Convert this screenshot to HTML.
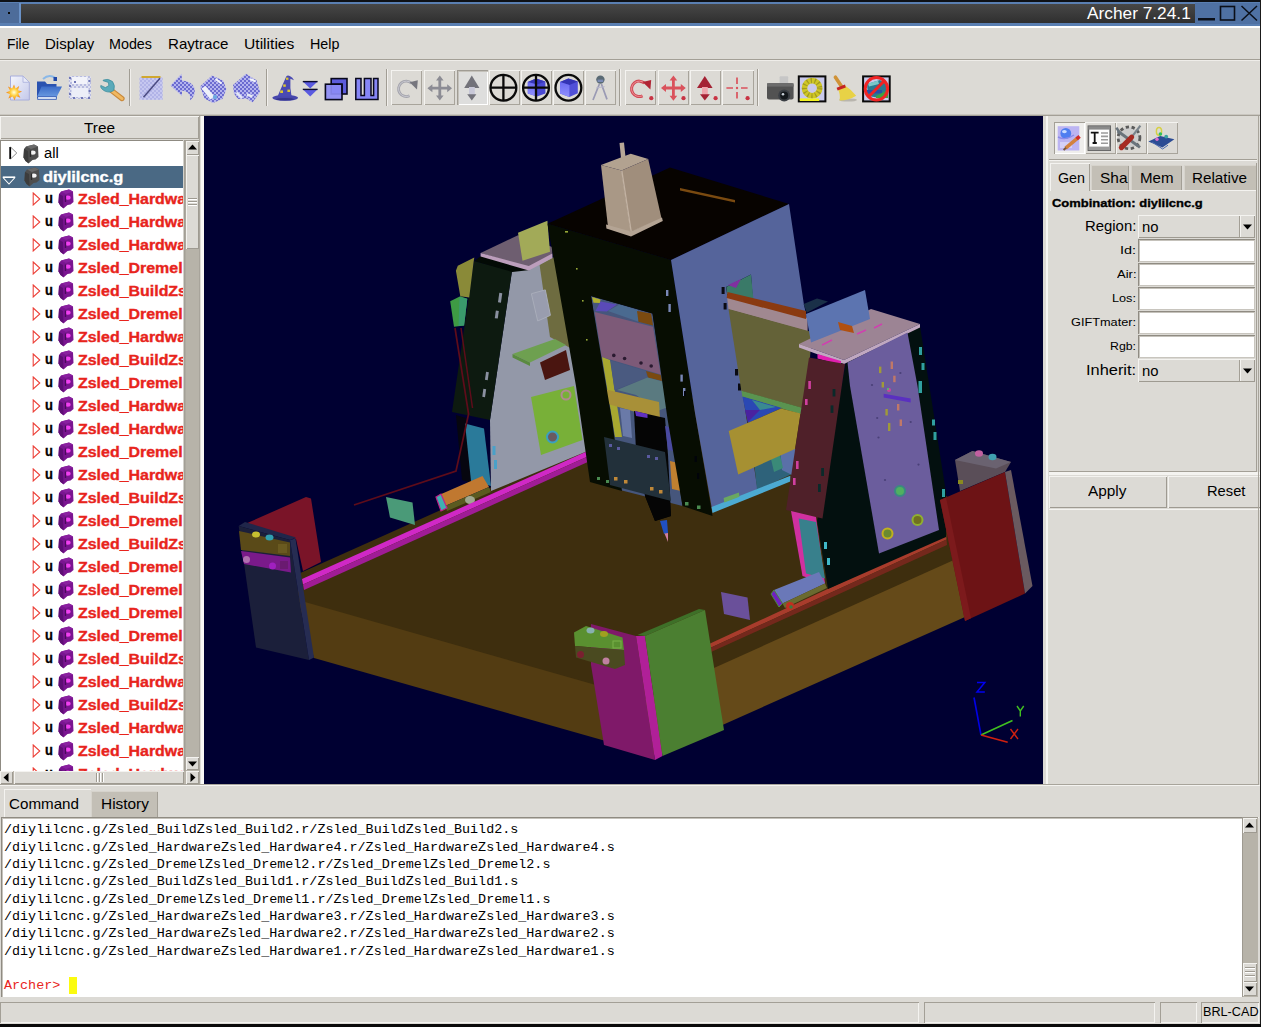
<!DOCTYPE html>
<html>
<head>
<meta charset="utf-8">
<title>Archer 7.24.1</title>
<style>
html,body{margin:0;padding:0;}
body{width:1261px;height:1027px;position:relative;overflow:hidden;background:#dcdad5;font-family:"Liberation Sans",sans-serif;color:#000;}
.abs{position:absolute;}
.t{position:absolute;white-space:nowrap;line-height:1;}
/* title bar */
#tb{left:0;top:0;width:1261px;height:26px;background:#5a7fb2;}
#tbdark{left:21px;top:4px;width:1174px;height:19px;background:linear-gradient(#474747,#2f2f2f);}
#tbleft{left:0;top:3px;width:19px;height:20px;background:#4d6c9a;}
/* generic */
.sunk{box-shadow:inset 1px 1px 0 #9e9a91,inset -1px -1px 0 #ffffff;}
.raised{box-shadow:inset 1px 1px 0 #ffffff,inset -1px -1px 0 #9e9a91;}
.btn{position:absolute;top:70px;height:35px;width:31px;box-shadow:inset 1px 1px 0 #f4f3f0,inset -1px -1px 0 #a8a49b;}
.vsep{position:absolute;top:69px;height:37px;width:1px;background:#a19d94;border-right:1px solid #f1efec;}
.menu{font-size:14.6px;top:37px;}
.trow{position:absolute;left:0;width:184px;height:23px;}
.zt{position:absolute;left:77px;top:4px;font-size:14.3px;font-weight:bold;color:#e8241c;white-space:nowrap;line-height:1;}
.zu{position:absolute;left:44px;top:3px;font-size:14px;font-weight:bold;color:#000;line-height:1;}
.lbl{position:absolute;font-size:12.5px;white-space:nowrap;line-height:1;text-align:right;width:86px;left:1050px;}
.ent{position:absolute;left:1138px;width:116px;height:22px;background:#fff;box-shadow:inset 1px 1px 0 #8a867d,inset 2px 2px 0 #c8c5be;}
.mono{font-family:"Liberation Mono",monospace;font-size:13.4px;position:absolute;left:4px;white-space:pre;line-height:1;color:#000;}
</style>
</head>
<body>
<!-- ===== TITLE BAR ===== -->
<div id="tb" class="abs"></div>
<div class="abs" style="left:0;top:0;width:1261px;height:2px;background:#0e1116;"></div>
<div id="tbleft" class="abs"></div>
<div class="abs" style="left:19px;top:3px;width:2px;height:20px;background:#6a92c8;"></div>
<div id="tbdark" class="abs"></div>
<div class="abs" style="left:8px;top:12px;width:2px;height:2px;background:#0a0a0a;"></div>
<div class="t" style="left:1087px;top:5px;font-size:17.3px;color:#fff;">Archer 7.24.1</div>
<svg class="abs" style="left:1195px;top:3px;" width="66" height="21" viewBox="1195 3 66 21">
<rect x="1195" y="3" width="66" height="21" fill="#4f71a3"/>
<rect x="1198" y="18" width="17" height="2.5" fill="#0b0f18"/>
<rect x="1220.5" y="6.5" width="14" height="13.5" fill="none" stroke="#0b0f18" stroke-width="1.6"/>
<path d="M1241.5 6 L1257 20.5 M1257 6 L1241.5 20.5" stroke="#0b0f18" stroke-width="1.5" fill="none"/>
</svg>
<div class="abs" style="left:0;top:26px;width:1261px;height:2px;background:#fff;"></div>

<!-- ===== MENU ===== -->
<div class="t" style="left:7.0px;top:36.6px;font-size:14.4px;color:#000;transform-origin:0 0;transform:scaleX(0.965);">File</div><div class="t" style="left:44.7px;top:36.6px;font-size:14.4px;color:#000;transform-origin:0 0;transform:scaleX(1.044);">Display</div><div class="t" style="left:109.0px;top:36.6px;font-size:14.4px;color:#000;transform-origin:0 0;transform:scaleX(0.995);">Modes</div><div class="t" style="left:167.5px;top:36.6px;font-size:14.4px;color:#000;transform-origin:0 0;transform:scaleX(1.050);">Raytrace</div><div class="t" style="left:243.6px;top:36.6px;font-size:14.4px;color:#000;transform-origin:0 0;transform:scaleX(1.086);">Utilities</div><div class="t" style="left:309.6px;top:36.6px;font-size:14.4px;color:#000;transform-origin:0 0;transform:scaleX(0.993);">Help</div>
<div class="abs" style="left:0;top:59px;width:1261px;height:1px;background:#a39f96;"></div>
<div class="abs" style="left:0;top:60px;width:1261px;height:1px;background:#efede9;"></div>

<!-- ===== TOOLBAR ===== -->
<div class="vsep" style="left:129px;"></div>
<div class="vsep" style="left:266px;"></div>
<div class="vsep" style="left:386px;"></div>
<div class="vsep" style="left:619px;"></div>
<div class="vsep" style="left:757px;"></div>
<div class="btn" style="left:391px;"></div>
<div class="btn" style="left:424px;"></div>
<div class="btn" style="left:457px;background:#dededd;box-shadow:inset 1px 1px 0 #a09c94,inset 2px 2px 0 #c4c1ba,inset -1px -1px 0 #fff;"></div>
<div class="btn" style="left:489px;"></div>
<div class="btn" style="left:521px;"></div>
<div class="btn" style="left:553px;"></div>
<div class="btn" style="left:585px;"></div>
<div class="btn" style="left:625px;"></div>
<div class="btn" style="left:658px;"></div>
<div class="btn" style="left:690px;"></div>
<div class="btn" style="left:722px;width:32px;"></div>
<svg class="abs" style="left:0;top:61px;" width="1261" height="53" viewBox="0 61 1261 53">
<defs>
<pattern id="chk" width="4" height="4" patternUnits="userSpaceOnUse"><rect width="4" height="4" fill="#b4b4ee"/><rect width="2" height="2" fill="#6c6cd0"/><rect x="2" y="2" width="2" height="2" fill="#6c6cd0"/></pattern>
<pattern id="chk2" width="4" height="4" patternUnits="userSpaceOnUse"><rect width="4" height="4" fill="#dfe1f0"/><rect width="2" height="2" fill="#b8bce0"/><rect x="2" y="2" width="2" height="2" fill="#b8bce0"/></pattern>
<linearGradient id="pg" x1="0" y1="0" x2="1" y2="1"><stop offset="0" stop-color="#f4f5fc"/><stop offset="1" stop-color="#c4c9ea"/></linearGradient>
<radialGradient id="sb"><stop offset="0" stop-color="#ffffe0"/><stop offset="0.45" stop-color="#ffd040"/><stop offset="1" stop-color="#f08018"/></radialGradient>
<linearGradient id="fold" x1="0" y1="0" x2="0" y2="1"><stop offset="0" stop-color="#3c6cc8"/><stop offset="1" stop-color="#6a9ae0"/></linearGradient>
<linearGradient id="cubeL" x1="0" y1="0" x2="0" y2="1"><stop offset="0" stop-color="#6a6af0"/><stop offset="1" stop-color="#9090ff"/></linearGradient>
</defs>
<!-- 1 new -->
<path d="M10.5 76 H23 L29.3 82.3 V100 H10.5Z" fill="url(#pg)" stroke="#a8aedc" stroke-width="1"/>
<path d="M23 76 V82.3 H29.3Z" fill="#e8eaf8" stroke="#a8aedc" stroke-width="0.8"/>
<path d="M14 84.5 L15.6 88.6 L19.2 86 L18 90.2 L22 91.5 L18.2 93.6 L20.4 97.8 L16.2 96.2 L14.6 100.2 L12.6 96.4 L8.4 98.4 L10 94.2 L6 92.6 L10 90.8 L8 86.6 L12.2 88.4Z" fill="url(#sb)"/>
<!-- 2 open -->
<path d="M43 79 Q49 73.5 55.5 78" stroke="#8ab8e8" stroke-width="2" fill="none"/>
<path d="M53.5 77 H57 V81 H53.5Z" fill="#2048a8"/>
<path d="M37 81.5 H45 L47 84 H56.5 V98 H37Z" fill="#2a52b0"/>
<path d="M41.5 86.6 H62 L56.7 97 H37Z" fill="url(#fold)"/>
<path d="M37.6 96.6 H56.4 V99.4 H37.6Z" fill="#e0e8f8" stroke="#2a52b0" stroke-width="0.8"/>
<!-- 3 save disabled -->
<rect x="68.8" y="76" width="22.2" height="23" rx="1.5" fill="url(#chk2)"/>
<rect x="72" y="77" width="15.5" height="7" fill="#f2f3fa"/>
<rect x="71.5" y="88" width="17" height="9" fill="#eceef8"/>
<g fill="#7078b8"><rect x="69" y="77" width="2" height="2"/><rect x="88.5" y="80" width="2" height="2"/><rect x="69" y="85" width="2" height="2"/><rect x="88.5" y="90" width="2" height="2"/><rect x="69" y="93" width="2" height="2"/><rect x="73" y="97" width="2" height="2"/><rect x="81" y="97" width="2" height="2"/><rect x="88" y="97" width="2" height="2"/><rect x="74" y="81" width="2" height="2"/></g>
<!-- 4 wrench -->
<path d="M111.5 90.5 L122 98.6" stroke="#c8883a" stroke-width="5.2" stroke-linecap="round"/>
<path d="M111.5 90.5 L122 98.6" stroke="#f0b860" stroke-width="3" stroke-linecap="round"/>
<path d="M103 80.2 Q108 78 112.5 81.5 Q115.5 85.5 113.8 90.5 L110.6 92 Q105 92.5 101.5 88.5 Q100.2 87 100.8 85.4 L105.4 87.6 L108.8 85.6 L108.4 82.4 L103.2 80.8Z" fill="#5aaaba" stroke="#3a8a9a" stroke-width="0.7"/>
<!-- 5 notepad disabled -->
<rect x="139.6" y="77.5" width="23" height="22.3" fill="url(#chk2)"/>
<rect x="139.6" y="77.5" width="23" height="22.3" fill="#a8a8f0" opacity="0.45"/>
<path d="M141.5 77 H160.5" stroke="#d0a830" stroke-width="2"/>
<path d="M143.5 97.2 L160 78.2" stroke="#4a4a80" stroke-width="1.5"/>
<!-- 6 undo disabled -->
<path d="M170.5 85.4 L181.6 73.8 L182 80.5 Q192 81 194.6 88.4 Q195.8 95.6 190 100.4 Q192 92.5 182 90.6 L182 96Z" fill="url(#chk)"/>
<!-- 7 -->
<path d="M200 86.5 L212 75.5 L223 80.5 L226.4 89 L222.5 99 L213 103 L204.5 98.5Z" fill="url(#chk)"/>
<path d="M201.5 88.5 L210.5 99.5 L214.5 96.5 L205.5 86Z" fill="#eef0f8"/>
<path d="M215.5 79 L221.5 83.5" stroke="#f2f4fa" stroke-width="2"/>
<circle cx="215" cy="97" r="2.2" fill="#70a8e0"/>
<!-- 8 -->
<path d="M233 85 L246 73.8 L256.5 80.2 L260 92 L252.5 102.5 L246.5 98.5 L238 99 L234 93.5Z" fill="url(#chk)"/>
<path d="M250 79 L255.5 81.5" stroke="#f2f4fa" stroke-width="2"/>
<path d="M236.5 92.5 L242 98 M247 94.5 L252.5 96.5" stroke="#e4e8f4" stroke-width="2.4"/>
<!-- 9 wizard hat -->
<ellipse cx="285.2" cy="97.8" rx="12.8" ry="3" fill="#4646ac"/>
<path d="M277.5 96.5 Q283 84 286.2 76.6 Q287.4 74.8 289.8 76 Q292.8 77.6 294 80.2 L290.4 78.8 Q289.8 88 291.6 96.6Z" fill="#4a4ab2"/>
<ellipse cx="285" cy="99.2" rx="9" ry="1.2" fill="#34348c"/>
<g fill="#dcc630"><rect x="286" y="77.6" width="2.4" height="2.2"/><rect x="283.2" y="84.4" width="2.6" height="2.4"/><rect x="280.2" y="90.4" width="2.8" height="2.6"/><rect x="287.4" y="89.6" width="2.6" height="2.4"/></g>
<!-- 10 double arrow -->
<path d="M302.8 81.4 H317.6 L310.2 88.6Z" fill="#5a5ae0"/><path d="M302.8 81.6 H317.6" stroke="#0c0c30" stroke-width="1.4"/>
<path d="M302.8 89.2 H317.6 L310.2 96.6Z" fill="#5a5ae0"/><path d="M302.8 89.4 H317.6" stroke="#0c0c30" stroke-width="1.4"/>
<!-- 11 squares -->
<rect x="331.2" y="78.6" width="15.8" height="15.4" fill="#5c5cdc" stroke="#08081c" stroke-width="1.6"/>
<rect x="325.4" y="84.2" width="16.6" height="15.4" fill="#8c8cf6" fill-opacity="0.92" stroke="#08081c" stroke-width="1.6"/>
<path d="M331.2 84.2 H342 V94" stroke="#08081c" stroke-width="1.2" fill="none"/>
<!-- 12 W -->
<path d="M355.8 78.4 H361 V95.4 H364.4 V78.4 H371 V95.4 H373.6 V78.4 H378 V99.6 H355.8Z" fill="#8686f6" stroke="#08081c" stroke-width="1.5"/>
<!-- 13 rotate grey -->
<path d="M411.5 83.2 A7.7 7.7 0 1 0 409.5 95.8" stroke="#a4a4ac" stroke-width="2.8" fill="none"/>
<path d="M411.5 83.2 A7.7 7.7 0 1 0 409.5 95.8" stroke="#c8c8d0" stroke-width="1" fill="none"/>
<path d="M409.6 82.2 L417.8 80.2 L417 89.4Z" fill="#76767e"/>
<!-- 14 translate grey -->
<path d="M439.8 75.4 L443.6 80.4 H441.2 V86.8 H447.2 V84.2 L452 88.2 L447.2 92.2 V89.6 H441.2 V95.6 H443.6 L439.8 100.6 L436 95.6 H438.4 V89.6 H432.4 V92.2 L427.4 88.2 L432.4 84.2 V86.8 H438.4 V80.4 H436Z" fill="#8c8c94"/>
<!-- 15 scale grey -->
<path d="M471.8 75.6 L479.4 88 H464.2Z" fill="#72727a"/>
<path d="M469 87 H474.8 V95 H469Z" fill="#c8c8d8"/>
<path d="M471.8 100.4 L467.2 94.2 H476.4Z" fill="#72727a"/>
<!-- 16 center -->
<g stroke="#0a0a0a" stroke-width="2.3" fill="none"><circle cx="503.4" cy="87.7" r="12.9"/><path d="M503.4 74.8 V100.6 M490.5 87.7 H516.3"/></g>
<!-- 17 -->
<path d="M527.8 82 L536 78.6 L545.4 81.4 V93.4 L537 96.6 L527.8 93.4Z" fill="#4a4ad4"/>
<path d="M527.8 82 L537 84.6 L545.4 81.4 L536 78.6Z" fill="#3636b8"/>
<path d="M527.8 82 L537 84.6 V96.6 L527.8 93.4Z" fill="url(#cubeL)"/>
<g stroke="#0a0a0a" stroke-width="2.3" fill="none"><circle cx="536" cy="87.7" r="12.9"/><path d="M536 74.8 V100.6 M523.1 87.7 H548.9"/></g>
<!-- 18 -->
<path d="M560 82 L568.4 78.4 L577.8 81.6 V93.2 L569.4 97 L560 93.4Z" fill="#5050d8"/>
<path d="M560 82 L569.4 85 L577.8 81.6 L568.4 78.4Z" fill="#3434b4"/>
<path d="M560 82 L569.4 85 V97 L560 93.4Z" fill="url(#cubeL)"/>
<g stroke="#0a0a0a" stroke-width="2.3" fill="none"><circle cx="568.4" cy="87.7" r="12.9"/></g>
<!-- 19 compass -->
<ellipse cx="600.4" cy="79.6" rx="4.2" ry="4.2" fill="#5a6a74"/>
<rect x="597.6" y="79.6" width="5.6" height="2.4" fill="#7a8ab4"/>
<path d="M599.4 84 L593 100 M601.4 84 L607 99.4" stroke="#9a9ab4" stroke-width="1.7" fill="none"/>
<path d="M596 88 L604.6 86.6" stroke="#b8b8cc" stroke-width="1"/>
<!-- 20 rotate red -->
<path d="M644.5 83.2 A7.7 7.7 0 1 0 642.5 95.8" stroke="#d04a54" stroke-width="3" fill="none"/>
<path d="M644.5 83.2 A7.7 7.7 0 1 0 642.5 95.8" stroke="#ee9098" stroke-width="1" fill="none"/>
<path d="M642.6 82 L651.2 80 L650.4 89.6Z" fill="#b02434"/>
<circle cx="651.3" cy="98.2" r="2.1" fill="#c83444"/>
<!-- 21 translate red -->
<path d="M673.4 75.6 L677.2 80.6 H674.8 V86.6 H680.8 V84 L685.8 88 L680.8 92 V89.4 H674.8 V95.8 H677.2 L673.4 100.8 L669.6 95.8 H672 V89.4 H666 V92 L661 88 L666 84 V86.6 H672 V80.6 H669.6Z" fill="#da525c"/>
<circle cx="683.5" cy="98.2" r="2.1" fill="#c83444"/>
<!-- 22 scale red -->
<path d="M704.8 76 L712.6 88 H697Z" fill="#a42234"/>
<path d="M702 87 H707.8 V95 H702Z" fill="#eea4ac"/>
<path d="M704.8 100.6 L700 94.2 H709.8Z" fill="#a42234"/>
<circle cx="715.6" cy="98.2" r="2.1" fill="#c83444"/>
<!-- 23 center red -->
<g stroke="#da525c" stroke-width="1.7" fill="none"><path d="M726.4 88 H733 M741 88 H747.6 M737 77.4 V84 M737 92 V98.6"/></g>
<circle cx="737" cy="88" r="1.2" fill="#da525c"/>
<circle cx="747.6" cy="98.2" r="2.1" fill="#c83444"/>
<!-- 24 camera -->
<rect x="779.6" y="76.2" width="8.6" height="8" rx="1" fill="#c6c6c6"/>
<path d="M767 85 Q767 83.2 769 83.2 H791.6 Q793.6 83.2 793.6 85 V97.8 Q793.6 99.6 791.6 99.6 H769 Q767 99.6 767 97.8Z" fill="#525252"/>
<rect x="767" y="83.2" width="26.6" height="3.4" fill="#6c6c6c"/>
<circle cx="784.2" cy="95.6" r="6" fill="#3a3e44"/>
<circle cx="784.2" cy="95.6" r="4" fill="#14181c"/>
<circle cx="783" cy="94.2" r="1.3" fill="#c8d0d8"/>
<!-- 25 ring -->
<rect x="798.8" y="76.4" width="26.6" height="25" fill="#c9c9ea" stroke="#0a0a0a" stroke-width="2"/>
<circle cx="812.1" cy="88.2" r="7.6" fill="none" stroke="#cfc624" stroke-width="5.6"/>
<circle cx="812.1" cy="88.2" r="7.6" fill="none" stroke="#7a7420" stroke-width="5.2" stroke-dasharray="1.2 2.6" opacity="0.55"/>
<rect x="799.8" y="98.4" width="19.4" height="2.6" fill="#f2f220"/>
<!-- 26 broom -->
<ellipse cx="848" cy="100" rx="9" ry="1.6" fill="#b8b5ae"/>
<path d="M835.4 77.2 L841.6 86.4" stroke="#d09236" stroke-width="3.6" stroke-linecap="round"/>
<path d="M837.6 88.4 L845 85.4 Q852 90 856.2 95.8 Q849 100.4 839.6 100.6 Q840.8 94 837.6 88.4Z" fill="#e8d246"/>
<path d="M836.6 87.8 L845 84.6 L845.8 87.4 L837.6 90.4Z" fill="#c42424"/>
<!-- 27 no-sign -->
<rect x="863.1" y="76.4" width="26.6" height="25" fill="#c9c9ea" stroke="#0a0a0a" stroke-width="2"/>
<path d="M867 84 L880 80 L886 84 L886 92 L880 98 L868 96Z" fill="#2a7a90"/>
<path d="M866.5 90 H882 V93.4 H866.5Z" fill="#2a50a8"/>
<path d="M876 96 L888 90 V98 H876Z" fill="#40a040"/>
<path d="M868 83.5 L878 80.5 L879 84 L869 86.5Z" fill="#7ac8c8"/>
<circle cx="876.4" cy="88.8" r="11.2" fill="none" stroke="#f02424" stroke-width="3"/>
<path d="M868.6 96.8 L884.4 80.8" stroke="#f02424" stroke-width="3"/>
</svg>

<div class="abs" style="left:0;top:114px;width:1261px;height:1px;background:#c9c6bf;"></div>
<div class="abs" style="left:0;top:115px;width:1261px;height:1px;background:#a39f96;"></div>

<!-- ===== TREE ===== -->
<div class="abs" style="left:0;top:116px;width:199px;height:23px;box-shadow:inset 1px 1px 0 #f4f3f0,inset -1px -1px 0 #a39f96;"></div>
<div class="t" style="left:84.0px;top:120.8px;font-size:14.2px;color:#000;transform-origin:0 0;transform:scaleX(1.081);">Tree</div>
<div class="abs" style="left:0;top:140px;width:183px;height:631px;background:#fff;box-shadow:inset 1px 1px 0 #8f8b82;overflow:hidden;">
<svg class="abs" style="left:9px;top:6px" width="9" height="14" viewBox="0 0 9 14"><path d="M1.2 1 V13" stroke="#000" stroke-width="1.8"/><path d="M1.5 1 L7.8 7 L1.5 13" stroke="#8a8a8a" stroke-width="1" fill="none"/></svg>
<svg class="abs" style="left:23px;top:4px" width="16" height="20" viewBox="0 0 16 20"><path d="M3 2.5 L11 0.5 L15 2.5 L15.5 13 L12.5 15.5 L9.5 16 L5.5 19.5 L2.5 17 L0.5 13.5 L1 5 Z" fill="#4e4e4e"/><path d="M3 2.5 L11 0.5 L15 2.5 L8 5 Z" fill="#6a6a6a"/><path d="M1 5 L5 7 L5.5 19 L2.5 17 L0.5 13.5Z" fill="#3c3c3c"/><ellipse cx="9.8" cy="8.6" rx="2.8" ry="2.2" fill="#f4f4f4"/><path d="M7.5 6.5 L7.5 13" stroke="#2a2a2a" stroke-width="1.3"/></svg>
<div class="t" style="left:43.6px;top:6.2px;font-size:14.0px;color:#000;transform-origin:0 0;transform:scaleX(1.050);">all</div>
<div class="abs" style="left:1px;top:26px;width:183px;height:22px;background:#4a6984;"></div>
<svg class="abs" style="left:2px;top:36px" width="14" height="9" viewBox="0 0 14 9"><path d="M0.8 1.2 H13.2" stroke="#fff" stroke-width="1.6"/><path d="M1 1.5 L7 8 L13 1.5" stroke="#fff" stroke-width="1.1" fill="none"/></svg>
<svg class="abs" style="left:24px;top:27px" width="16" height="20" viewBox="0 0 16 20"><path d="M3 2.5 L11 0.5 L15 2.5 L15.5 13 L12.5 15.5 L9.5 16 L5.5 19.5 L2.5 17 L0.5 13.5 L1 5 Z" fill="#4e4e4e"/><path d="M3 2.5 L11 0.5 L15 2.5 L8 5 Z" fill="#6a6a6a"/><path d="M1 5 L5 7 L5.5 19 L2.5 17 L0.5 13.5Z" fill="#3c3c3c"/><ellipse cx="9.8" cy="8.6" rx="2.8" ry="2.2" fill="#f4f4f4"/><path d="M7.5 6.5 L7.5 13" stroke="#2a2a2a" stroke-width="1.3"/></svg>
<div class="t" style="left:43.4px;top:30.0px;font-size:14.0px;font-weight:bold;-webkit-text-stroke:0.35px;color:#fff;transform-origin:0 0;transform:scaleX(1.173);">diylilcnc.g</div>
<svg class="abs" style="left:32px;top:52px" width="9" height="14" viewBox="0 0 9 14"><path d="M1.2 1 L7.8 7 L1.2 13 Z" stroke="#ec3e36" stroke-width="1.05" fill="none"/></svg>
<div class="t" style="left:45.2px;top:51.0px;font-size:14.0px;font-weight:bold;-webkit-text-stroke:0.35px;color:#000;transform-origin:0 0;transform:scaleX(0.924);">u</div>
<svg class="abs" style="left:58px;top:49px" width="16" height="20" viewBox="0 0 16 20"><path d="M3 2.5 L11 0.5 L15 2.5 L15.5 13 L12.5 15.5 L9.5 16 L5.5 19.5 L2.5 17 L0.5 13.5 L1 5 Z" fill="#7a1590"/><path d="M3 2.5 L11 0.5 L15 2.5 L8 5 Z" fill="#8a20a0"/><path d="M1 5 L5 7 L5.5 19 L2.5 17 L0.5 13.5Z" fill="#5e0e74"/><ellipse cx="9.8" cy="8.6" rx="2.8" ry="2.2" fill="#f040f0"/><path d="M7.5 6.5 L7.5 13" stroke="#4a0a5c" stroke-width="1.3"/></svg>
<div class="t" style="left:77.8px;top:52.2px;font-size:14px;font-weight:bold;-webkit-text-stroke:0.35px #e8241c;color:#e8241c;transform-origin:0 0;transform:scaleX(1.139);">Zsled_HardwareZsled_Hardware4.r</div>
<svg class="abs" style="left:32px;top:75px" width="9" height="14" viewBox="0 0 9 14"><path d="M1.2 1 L7.8 7 L1.2 13 Z" stroke="#ec3e36" stroke-width="1.05" fill="none"/></svg>
<div class="t" style="left:45.2px;top:74.0px;font-size:14.0px;font-weight:bold;-webkit-text-stroke:0.35px;color:#000;transform-origin:0 0;transform:scaleX(0.924);">u</div>
<svg class="abs" style="left:58px;top:72px" width="16" height="20" viewBox="0 0 16 20"><path d="M3 2.5 L11 0.5 L15 2.5 L15.5 13 L12.5 15.5 L9.5 16 L5.5 19.5 L2.5 17 L0.5 13.5 L1 5 Z" fill="#7a1590"/><path d="M3 2.5 L11 0.5 L15 2.5 L8 5 Z" fill="#8a20a0"/><path d="M1 5 L5 7 L5.5 19 L2.5 17 L0.5 13.5Z" fill="#5e0e74"/><ellipse cx="9.8" cy="8.6" rx="2.8" ry="2.2" fill="#f040f0"/><path d="M7.5 6.5 L7.5 13" stroke="#4a0a5c" stroke-width="1.3"/></svg>
<div class="t" style="left:77.8px;top:75.2px;font-size:14px;font-weight:bold;-webkit-text-stroke:0.35px #e8241c;color:#e8241c;transform-origin:0 0;transform:scaleX(1.139);">Zsled_HardwareZsled_Hardware4.r</div>
<svg class="abs" style="left:32px;top:98px" width="9" height="14" viewBox="0 0 9 14"><path d="M1.2 1 L7.8 7 L1.2 13 Z" stroke="#ec3e36" stroke-width="1.05" fill="none"/></svg>
<div class="t" style="left:45.2px;top:97.0px;font-size:14.0px;font-weight:bold;-webkit-text-stroke:0.35px;color:#000;transform-origin:0 0;transform:scaleX(0.924);">u</div>
<svg class="abs" style="left:58px;top:95px" width="16" height="20" viewBox="0 0 16 20"><path d="M3 2.5 L11 0.5 L15 2.5 L15.5 13 L12.5 15.5 L9.5 16 L5.5 19.5 L2.5 17 L0.5 13.5 L1 5 Z" fill="#7a1590"/><path d="M3 2.5 L11 0.5 L15 2.5 L8 5 Z" fill="#8a20a0"/><path d="M1 5 L5 7 L5.5 19 L2.5 17 L0.5 13.5Z" fill="#5e0e74"/><ellipse cx="9.8" cy="8.6" rx="2.8" ry="2.2" fill="#f040f0"/><path d="M7.5 6.5 L7.5 13" stroke="#4a0a5c" stroke-width="1.3"/></svg>
<div class="t" style="left:77.8px;top:98.2px;font-size:14px;font-weight:bold;-webkit-text-stroke:0.35px #e8241c;color:#e8241c;transform-origin:0 0;transform:scaleX(1.139);">Zsled_HardwareZsled_Hardware4.r</div>
<svg class="abs" style="left:32px;top:121px" width="9" height="14" viewBox="0 0 9 14"><path d="M1.2 1 L7.8 7 L1.2 13 Z" stroke="#ec3e36" stroke-width="1.05" fill="none"/></svg>
<div class="t" style="left:45.2px;top:120.0px;font-size:14.0px;font-weight:bold;-webkit-text-stroke:0.35px;color:#000;transform-origin:0 0;transform:scaleX(0.924);">u</div>
<svg class="abs" style="left:58px;top:118px" width="16" height="20" viewBox="0 0 16 20"><path d="M3 2.5 L11 0.5 L15 2.5 L15.5 13 L12.5 15.5 L9.5 16 L5.5 19.5 L2.5 17 L0.5 13.5 L1 5 Z" fill="#7a1590"/><path d="M3 2.5 L11 0.5 L15 2.5 L8 5 Z" fill="#8a20a0"/><path d="M1 5 L5 7 L5.5 19 L2.5 17 L0.5 13.5Z" fill="#5e0e74"/><ellipse cx="9.8" cy="8.6" rx="2.8" ry="2.2" fill="#f040f0"/><path d="M7.5 6.5 L7.5 13" stroke="#4a0a5c" stroke-width="1.3"/></svg>
<div class="t" style="left:77.8px;top:121.2px;font-size:14px;font-weight:bold;-webkit-text-stroke:0.35px #e8241c;color:#e8241c;transform-origin:0 0;transform:scaleX(1.139);">Zsled_Dremel</div>
<svg class="abs" style="left:32px;top:144px" width="9" height="14" viewBox="0 0 9 14"><path d="M1.2 1 L7.8 7 L1.2 13 Z" stroke="#ec3e36" stroke-width="1.05" fill="none"/></svg>
<div class="t" style="left:45.2px;top:143.0px;font-size:14.0px;font-weight:bold;-webkit-text-stroke:0.35px;color:#000;transform-origin:0 0;transform:scaleX(0.924);">u</div>
<svg class="abs" style="left:58px;top:141px" width="16" height="20" viewBox="0 0 16 20"><path d="M3 2.5 L11 0.5 L15 2.5 L15.5 13 L12.5 15.5 L9.5 16 L5.5 19.5 L2.5 17 L0.5 13.5 L1 5 Z" fill="#7a1590"/><path d="M3 2.5 L11 0.5 L15 2.5 L8 5 Z" fill="#8a20a0"/><path d="M1 5 L5 7 L5.5 19 L2.5 17 L0.5 13.5Z" fill="#5e0e74"/><ellipse cx="9.8" cy="8.6" rx="2.8" ry="2.2" fill="#f040f0"/><path d="M7.5 6.5 L7.5 13" stroke="#4a0a5c" stroke-width="1.3"/></svg>
<div class="t" style="left:77.8px;top:144.2px;font-size:14px;font-weight:bold;-webkit-text-stroke:0.35px #e8241c;color:#e8241c;transform-origin:0 0;transform:scaleX(1.139);">Zsled_BuildZsled_Build2.r</div>
<svg class="abs" style="left:32px;top:167px" width="9" height="14" viewBox="0 0 9 14"><path d="M1.2 1 L7.8 7 L1.2 13 Z" stroke="#ec3e36" stroke-width="1.05" fill="none"/></svg>
<div class="t" style="left:45.2px;top:166.0px;font-size:14.0px;font-weight:bold;-webkit-text-stroke:0.35px;color:#000;transform-origin:0 0;transform:scaleX(0.924);">u</div>
<svg class="abs" style="left:58px;top:164px" width="16" height="20" viewBox="0 0 16 20"><path d="M3 2.5 L11 0.5 L15 2.5 L15.5 13 L12.5 15.5 L9.5 16 L5.5 19.5 L2.5 17 L0.5 13.5 L1 5 Z" fill="#7a1590"/><path d="M3 2.5 L11 0.5 L15 2.5 L8 5 Z" fill="#8a20a0"/><path d="M1 5 L5 7 L5.5 19 L2.5 17 L0.5 13.5Z" fill="#5e0e74"/><ellipse cx="9.8" cy="8.6" rx="2.8" ry="2.2" fill="#f040f0"/><path d="M7.5 6.5 L7.5 13" stroke="#4a0a5c" stroke-width="1.3"/></svg>
<div class="t" style="left:77.8px;top:167.2px;font-size:14px;font-weight:bold;-webkit-text-stroke:0.35px #e8241c;color:#e8241c;transform-origin:0 0;transform:scaleX(1.139);">Zsled_Dremel</div>
<svg class="abs" style="left:32px;top:190px" width="9" height="14" viewBox="0 0 9 14"><path d="M1.2 1 L7.8 7 L1.2 13 Z" stroke="#ec3e36" stroke-width="1.05" fill="none"/></svg>
<div class="t" style="left:45.2px;top:189.0px;font-size:14.0px;font-weight:bold;-webkit-text-stroke:0.35px;color:#000;transform-origin:0 0;transform:scaleX(0.924);">u</div>
<svg class="abs" style="left:58px;top:187px" width="16" height="20" viewBox="0 0 16 20"><path d="M3 2.5 L11 0.5 L15 2.5 L15.5 13 L12.5 15.5 L9.5 16 L5.5 19.5 L2.5 17 L0.5 13.5 L1 5 Z" fill="#7a1590"/><path d="M3 2.5 L11 0.5 L15 2.5 L8 5 Z" fill="#8a20a0"/><path d="M1 5 L5 7 L5.5 19 L2.5 17 L0.5 13.5Z" fill="#5e0e74"/><ellipse cx="9.8" cy="8.6" rx="2.8" ry="2.2" fill="#f040f0"/><path d="M7.5 6.5 L7.5 13" stroke="#4a0a5c" stroke-width="1.3"/></svg>
<div class="t" style="left:77.8px;top:190.2px;font-size:14px;font-weight:bold;-webkit-text-stroke:0.35px #e8241c;color:#e8241c;transform-origin:0 0;transform:scaleX(1.139);">Zsled_HardwareZsled_Hardware4.r</div>
<svg class="abs" style="left:32px;top:213px" width="9" height="14" viewBox="0 0 9 14"><path d="M1.2 1 L7.8 7 L1.2 13 Z" stroke="#ec3e36" stroke-width="1.05" fill="none"/></svg>
<div class="t" style="left:45.2px;top:212.0px;font-size:14.0px;font-weight:bold;-webkit-text-stroke:0.35px;color:#000;transform-origin:0 0;transform:scaleX(0.924);">u</div>
<svg class="abs" style="left:58px;top:210px" width="16" height="20" viewBox="0 0 16 20"><path d="M3 2.5 L11 0.5 L15 2.5 L15.5 13 L12.5 15.5 L9.5 16 L5.5 19.5 L2.5 17 L0.5 13.5 L1 5 Z" fill="#7a1590"/><path d="M3 2.5 L11 0.5 L15 2.5 L8 5 Z" fill="#8a20a0"/><path d="M1 5 L5 7 L5.5 19 L2.5 17 L0.5 13.5Z" fill="#5e0e74"/><ellipse cx="9.8" cy="8.6" rx="2.8" ry="2.2" fill="#f040f0"/><path d="M7.5 6.5 L7.5 13" stroke="#4a0a5c" stroke-width="1.3"/></svg>
<div class="t" style="left:77.8px;top:213.2px;font-size:14px;font-weight:bold;-webkit-text-stroke:0.35px #e8241c;color:#e8241c;transform-origin:0 0;transform:scaleX(1.139);">Zsled_BuildZsled_Build2.r</div>
<svg class="abs" style="left:32px;top:236px" width="9" height="14" viewBox="0 0 9 14"><path d="M1.2 1 L7.8 7 L1.2 13 Z" stroke="#ec3e36" stroke-width="1.05" fill="none"/></svg>
<div class="t" style="left:45.2px;top:235.0px;font-size:14.0px;font-weight:bold;-webkit-text-stroke:0.35px;color:#000;transform-origin:0 0;transform:scaleX(0.924);">u</div>
<svg class="abs" style="left:58px;top:233px" width="16" height="20" viewBox="0 0 16 20"><path d="M3 2.5 L11 0.5 L15 2.5 L15.5 13 L12.5 15.5 L9.5 16 L5.5 19.5 L2.5 17 L0.5 13.5 L1 5 Z" fill="#7a1590"/><path d="M3 2.5 L11 0.5 L15 2.5 L8 5 Z" fill="#8a20a0"/><path d="M1 5 L5 7 L5.5 19 L2.5 17 L0.5 13.5Z" fill="#5e0e74"/><ellipse cx="9.8" cy="8.6" rx="2.8" ry="2.2" fill="#f040f0"/><path d="M7.5 6.5 L7.5 13" stroke="#4a0a5c" stroke-width="1.3"/></svg>
<div class="t" style="left:77.8px;top:236.2px;font-size:14px;font-weight:bold;-webkit-text-stroke:0.35px #e8241c;color:#e8241c;transform-origin:0 0;transform:scaleX(1.139);">Zsled_Dremel</div>
<svg class="abs" style="left:32px;top:259px" width="9" height="14" viewBox="0 0 9 14"><path d="M1.2 1 L7.8 7 L1.2 13 Z" stroke="#ec3e36" stroke-width="1.05" fill="none"/></svg>
<div class="t" style="left:45.2px;top:258.0px;font-size:14.0px;font-weight:bold;-webkit-text-stroke:0.35px;color:#000;transform-origin:0 0;transform:scaleX(0.924);">u</div>
<svg class="abs" style="left:58px;top:256px" width="16" height="20" viewBox="0 0 16 20"><path d="M3 2.5 L11 0.5 L15 2.5 L15.5 13 L12.5 15.5 L9.5 16 L5.5 19.5 L2.5 17 L0.5 13.5 L1 5 Z" fill="#7a1590"/><path d="M3 2.5 L11 0.5 L15 2.5 L8 5 Z" fill="#8a20a0"/><path d="M1 5 L5 7 L5.5 19 L2.5 17 L0.5 13.5Z" fill="#5e0e74"/><ellipse cx="9.8" cy="8.6" rx="2.8" ry="2.2" fill="#f040f0"/><path d="M7.5 6.5 L7.5 13" stroke="#4a0a5c" stroke-width="1.3"/></svg>
<div class="t" style="left:77.8px;top:259.2px;font-size:14px;font-weight:bold;-webkit-text-stroke:0.35px #e8241c;color:#e8241c;transform-origin:0 0;transform:scaleX(1.139);">Zsled_HardwareZsled_Hardware4.r</div>
<svg class="abs" style="left:32px;top:282px" width="9" height="14" viewBox="0 0 9 14"><path d="M1.2 1 L7.8 7 L1.2 13 Z" stroke="#ec3e36" stroke-width="1.05" fill="none"/></svg>
<div class="t" style="left:45.2px;top:281.0px;font-size:14.0px;font-weight:bold;-webkit-text-stroke:0.35px;color:#000;transform-origin:0 0;transform:scaleX(0.924);">u</div>
<svg class="abs" style="left:58px;top:279px" width="16" height="20" viewBox="0 0 16 20"><path d="M3 2.5 L11 0.5 L15 2.5 L15.5 13 L12.5 15.5 L9.5 16 L5.5 19.5 L2.5 17 L0.5 13.5 L1 5 Z" fill="#7a1590"/><path d="M3 2.5 L11 0.5 L15 2.5 L8 5 Z" fill="#8a20a0"/><path d="M1 5 L5 7 L5.5 19 L2.5 17 L0.5 13.5Z" fill="#5e0e74"/><ellipse cx="9.8" cy="8.6" rx="2.8" ry="2.2" fill="#f040f0"/><path d="M7.5 6.5 L7.5 13" stroke="#4a0a5c" stroke-width="1.3"/></svg>
<div class="t" style="left:77.8px;top:282.2px;font-size:14px;font-weight:bold;-webkit-text-stroke:0.35px #e8241c;color:#e8241c;transform-origin:0 0;transform:scaleX(1.139);">Zsled_HardwareZsled_Hardware4.r</div>
<svg class="abs" style="left:32px;top:305px" width="9" height="14" viewBox="0 0 9 14"><path d="M1.2 1 L7.8 7 L1.2 13 Z" stroke="#ec3e36" stroke-width="1.05" fill="none"/></svg>
<div class="t" style="left:45.2px;top:304.0px;font-size:14.0px;font-weight:bold;-webkit-text-stroke:0.35px;color:#000;transform-origin:0 0;transform:scaleX(0.924);">u</div>
<svg class="abs" style="left:58px;top:302px" width="16" height="20" viewBox="0 0 16 20"><path d="M3 2.5 L11 0.5 L15 2.5 L15.5 13 L12.5 15.5 L9.5 16 L5.5 19.5 L2.5 17 L0.5 13.5 L1 5 Z" fill="#7a1590"/><path d="M3 2.5 L11 0.5 L15 2.5 L8 5 Z" fill="#8a20a0"/><path d="M1 5 L5 7 L5.5 19 L2.5 17 L0.5 13.5Z" fill="#5e0e74"/><ellipse cx="9.8" cy="8.6" rx="2.8" ry="2.2" fill="#f040f0"/><path d="M7.5 6.5 L7.5 13" stroke="#4a0a5c" stroke-width="1.3"/></svg>
<div class="t" style="left:77.8px;top:305.2px;font-size:14px;font-weight:bold;-webkit-text-stroke:0.35px #e8241c;color:#e8241c;transform-origin:0 0;transform:scaleX(1.139);">Zsled_Dremel</div>
<svg class="abs" style="left:32px;top:328px" width="9" height="14" viewBox="0 0 9 14"><path d="M1.2 1 L7.8 7 L1.2 13 Z" stroke="#ec3e36" stroke-width="1.05" fill="none"/></svg>
<div class="t" style="left:45.2px;top:327.0px;font-size:14.0px;font-weight:bold;-webkit-text-stroke:0.35px;color:#000;transform-origin:0 0;transform:scaleX(0.924);">u</div>
<svg class="abs" style="left:58px;top:325px" width="16" height="20" viewBox="0 0 16 20"><path d="M3 2.5 L11 0.5 L15 2.5 L15.5 13 L12.5 15.5 L9.5 16 L5.5 19.5 L2.5 17 L0.5 13.5 L1 5 Z" fill="#7a1590"/><path d="M3 2.5 L11 0.5 L15 2.5 L8 5 Z" fill="#8a20a0"/><path d="M1 5 L5 7 L5.5 19 L2.5 17 L0.5 13.5Z" fill="#5e0e74"/><ellipse cx="9.8" cy="8.6" rx="2.8" ry="2.2" fill="#f040f0"/><path d="M7.5 6.5 L7.5 13" stroke="#4a0a5c" stroke-width="1.3"/></svg>
<div class="t" style="left:77.8px;top:328.2px;font-size:14px;font-weight:bold;-webkit-text-stroke:0.35px #e8241c;color:#e8241c;transform-origin:0 0;transform:scaleX(1.139);">Zsled_HardwareZsled_Hardware4.r</div>
<svg class="abs" style="left:32px;top:351px" width="9" height="14" viewBox="0 0 9 14"><path d="M1.2 1 L7.8 7 L1.2 13 Z" stroke="#ec3e36" stroke-width="1.05" fill="none"/></svg>
<div class="t" style="left:45.2px;top:350.0px;font-size:14.0px;font-weight:bold;-webkit-text-stroke:0.35px;color:#000;transform-origin:0 0;transform:scaleX(0.924);">u</div>
<svg class="abs" style="left:58px;top:348px" width="16" height="20" viewBox="0 0 16 20"><path d="M3 2.5 L11 0.5 L15 2.5 L15.5 13 L12.5 15.5 L9.5 16 L5.5 19.5 L2.5 17 L0.5 13.5 L1 5 Z" fill="#7a1590"/><path d="M3 2.5 L11 0.5 L15 2.5 L8 5 Z" fill="#8a20a0"/><path d="M1 5 L5 7 L5.5 19 L2.5 17 L0.5 13.5Z" fill="#5e0e74"/><ellipse cx="9.8" cy="8.6" rx="2.8" ry="2.2" fill="#f040f0"/><path d="M7.5 6.5 L7.5 13" stroke="#4a0a5c" stroke-width="1.3"/></svg>
<div class="t" style="left:77.8px;top:351.2px;font-size:14px;font-weight:bold;-webkit-text-stroke:0.35px #e8241c;color:#e8241c;transform-origin:0 0;transform:scaleX(1.139);">Zsled_BuildZsled_Build2.r</div>
<svg class="abs" style="left:32px;top:374px" width="9" height="14" viewBox="0 0 9 14"><path d="M1.2 1 L7.8 7 L1.2 13 Z" stroke="#ec3e36" stroke-width="1.05" fill="none"/></svg>
<div class="t" style="left:45.2px;top:373.0px;font-size:14.0px;font-weight:bold;-webkit-text-stroke:0.35px;color:#000;transform-origin:0 0;transform:scaleX(0.924);">u</div>
<svg class="abs" style="left:58px;top:371px" width="16" height="20" viewBox="0 0 16 20"><path d="M3 2.5 L11 0.5 L15 2.5 L15.5 13 L12.5 15.5 L9.5 16 L5.5 19.5 L2.5 17 L0.5 13.5 L1 5 Z" fill="#7a1590"/><path d="M3 2.5 L11 0.5 L15 2.5 L8 5 Z" fill="#8a20a0"/><path d="M1 5 L5 7 L5.5 19 L2.5 17 L0.5 13.5Z" fill="#5e0e74"/><ellipse cx="9.8" cy="8.6" rx="2.8" ry="2.2" fill="#f040f0"/><path d="M7.5 6.5 L7.5 13" stroke="#4a0a5c" stroke-width="1.3"/></svg>
<div class="t" style="left:77.8px;top:374.2px;font-size:14px;font-weight:bold;-webkit-text-stroke:0.35px #e8241c;color:#e8241c;transform-origin:0 0;transform:scaleX(1.139);">Zsled_Dremel</div>
<svg class="abs" style="left:32px;top:397px" width="9" height="14" viewBox="0 0 9 14"><path d="M1.2 1 L7.8 7 L1.2 13 Z" stroke="#ec3e36" stroke-width="1.05" fill="none"/></svg>
<div class="t" style="left:45.2px;top:396.0px;font-size:14.0px;font-weight:bold;-webkit-text-stroke:0.35px;color:#000;transform-origin:0 0;transform:scaleX(0.924);">u</div>
<svg class="abs" style="left:58px;top:394px" width="16" height="20" viewBox="0 0 16 20"><path d="M3 2.5 L11 0.5 L15 2.5 L15.5 13 L12.5 15.5 L9.5 16 L5.5 19.5 L2.5 17 L0.5 13.5 L1 5 Z" fill="#7a1590"/><path d="M3 2.5 L11 0.5 L15 2.5 L8 5 Z" fill="#8a20a0"/><path d="M1 5 L5 7 L5.5 19 L2.5 17 L0.5 13.5Z" fill="#5e0e74"/><ellipse cx="9.8" cy="8.6" rx="2.8" ry="2.2" fill="#f040f0"/><path d="M7.5 6.5 L7.5 13" stroke="#4a0a5c" stroke-width="1.3"/></svg>
<div class="t" style="left:77.8px;top:397.2px;font-size:14px;font-weight:bold;-webkit-text-stroke:0.35px #e8241c;color:#e8241c;transform-origin:0 0;transform:scaleX(1.139);">Zsled_BuildZsled_Build2.r</div>
<svg class="abs" style="left:32px;top:420px" width="9" height="14" viewBox="0 0 9 14"><path d="M1.2 1 L7.8 7 L1.2 13 Z" stroke="#ec3e36" stroke-width="1.05" fill="none"/></svg>
<div class="t" style="left:45.2px;top:419.0px;font-size:14.0px;font-weight:bold;-webkit-text-stroke:0.35px;color:#000;transform-origin:0 0;transform:scaleX(0.924);">u</div>
<svg class="abs" style="left:58px;top:417px" width="16" height="20" viewBox="0 0 16 20"><path d="M3 2.5 L11 0.5 L15 2.5 L15.5 13 L12.5 15.5 L9.5 16 L5.5 19.5 L2.5 17 L0.5 13.5 L1 5 Z" fill="#7a1590"/><path d="M3 2.5 L11 0.5 L15 2.5 L8 5 Z" fill="#8a20a0"/><path d="M1 5 L5 7 L5.5 19 L2.5 17 L0.5 13.5Z" fill="#5e0e74"/><ellipse cx="9.8" cy="8.6" rx="2.8" ry="2.2" fill="#f040f0"/><path d="M7.5 6.5 L7.5 13" stroke="#4a0a5c" stroke-width="1.3"/></svg>
<div class="t" style="left:77.8px;top:420.2px;font-size:14px;font-weight:bold;-webkit-text-stroke:0.35px #e8241c;color:#e8241c;transform-origin:0 0;transform:scaleX(1.139);">Zsled_Dremel</div>
<svg class="abs" style="left:32px;top:443px" width="9" height="14" viewBox="0 0 9 14"><path d="M1.2 1 L7.8 7 L1.2 13 Z" stroke="#ec3e36" stroke-width="1.05" fill="none"/></svg>
<div class="t" style="left:45.2px;top:442.0px;font-size:14.0px;font-weight:bold;-webkit-text-stroke:0.35px;color:#000;transform-origin:0 0;transform:scaleX(0.924);">u</div>
<svg class="abs" style="left:58px;top:440px" width="16" height="20" viewBox="0 0 16 20"><path d="M3 2.5 L11 0.5 L15 2.5 L15.5 13 L12.5 15.5 L9.5 16 L5.5 19.5 L2.5 17 L0.5 13.5 L1 5 Z" fill="#7a1590"/><path d="M3 2.5 L11 0.5 L15 2.5 L8 5 Z" fill="#8a20a0"/><path d="M1 5 L5 7 L5.5 19 L2.5 17 L0.5 13.5Z" fill="#5e0e74"/><ellipse cx="9.8" cy="8.6" rx="2.8" ry="2.2" fill="#f040f0"/><path d="M7.5 6.5 L7.5 13" stroke="#4a0a5c" stroke-width="1.3"/></svg>
<div class="t" style="left:77.8px;top:443.2px;font-size:14px;font-weight:bold;-webkit-text-stroke:0.35px #e8241c;color:#e8241c;transform-origin:0 0;transform:scaleX(1.139);">Zsled_Dremel</div>
<svg class="abs" style="left:32px;top:466px" width="9" height="14" viewBox="0 0 9 14"><path d="M1.2 1 L7.8 7 L1.2 13 Z" stroke="#ec3e36" stroke-width="1.05" fill="none"/></svg>
<div class="t" style="left:45.2px;top:465.0px;font-size:14.0px;font-weight:bold;-webkit-text-stroke:0.35px;color:#000;transform-origin:0 0;transform:scaleX(0.924);">u</div>
<svg class="abs" style="left:58px;top:463px" width="16" height="20" viewBox="0 0 16 20"><path d="M3 2.5 L11 0.5 L15 2.5 L15.5 13 L12.5 15.5 L9.5 16 L5.5 19.5 L2.5 17 L0.5 13.5 L1 5 Z" fill="#7a1590"/><path d="M3 2.5 L11 0.5 L15 2.5 L8 5 Z" fill="#8a20a0"/><path d="M1 5 L5 7 L5.5 19 L2.5 17 L0.5 13.5Z" fill="#5e0e74"/><ellipse cx="9.8" cy="8.6" rx="2.8" ry="2.2" fill="#f040f0"/><path d="M7.5 6.5 L7.5 13" stroke="#4a0a5c" stroke-width="1.3"/></svg>
<div class="t" style="left:77.8px;top:466.2px;font-size:14px;font-weight:bold;-webkit-text-stroke:0.35px #e8241c;color:#e8241c;transform-origin:0 0;transform:scaleX(1.139);">Zsled_Dremel</div>
<svg class="abs" style="left:32px;top:489px" width="9" height="14" viewBox="0 0 9 14"><path d="M1.2 1 L7.8 7 L1.2 13 Z" stroke="#ec3e36" stroke-width="1.05" fill="none"/></svg>
<div class="t" style="left:45.2px;top:488.0px;font-size:14.0px;font-weight:bold;-webkit-text-stroke:0.35px;color:#000;transform-origin:0 0;transform:scaleX(0.924);">u</div>
<svg class="abs" style="left:58px;top:486px" width="16" height="20" viewBox="0 0 16 20"><path d="M3 2.5 L11 0.5 L15 2.5 L15.5 13 L12.5 15.5 L9.5 16 L5.5 19.5 L2.5 17 L0.5 13.5 L1 5 Z" fill="#7a1590"/><path d="M3 2.5 L11 0.5 L15 2.5 L8 5 Z" fill="#8a20a0"/><path d="M1 5 L5 7 L5.5 19 L2.5 17 L0.5 13.5Z" fill="#5e0e74"/><ellipse cx="9.8" cy="8.6" rx="2.8" ry="2.2" fill="#f040f0"/><path d="M7.5 6.5 L7.5 13" stroke="#4a0a5c" stroke-width="1.3"/></svg>
<div class="t" style="left:77.8px;top:489.2px;font-size:14px;font-weight:bold;-webkit-text-stroke:0.35px #e8241c;color:#e8241c;transform-origin:0 0;transform:scaleX(1.139);">Zsled_Dremel</div>
<svg class="abs" style="left:32px;top:512px" width="9" height="14" viewBox="0 0 9 14"><path d="M1.2 1 L7.8 7 L1.2 13 Z" stroke="#ec3e36" stroke-width="1.05" fill="none"/></svg>
<div class="t" style="left:45.2px;top:511.0px;font-size:14.0px;font-weight:bold;-webkit-text-stroke:0.35px;color:#000;transform-origin:0 0;transform:scaleX(0.924);">u</div>
<svg class="abs" style="left:58px;top:509px" width="16" height="20" viewBox="0 0 16 20"><path d="M3 2.5 L11 0.5 L15 2.5 L15.5 13 L12.5 15.5 L9.5 16 L5.5 19.5 L2.5 17 L0.5 13.5 L1 5 Z" fill="#7a1590"/><path d="M3 2.5 L11 0.5 L15 2.5 L8 5 Z" fill="#8a20a0"/><path d="M1 5 L5 7 L5.5 19 L2.5 17 L0.5 13.5Z" fill="#5e0e74"/><ellipse cx="9.8" cy="8.6" rx="2.8" ry="2.2" fill="#f040f0"/><path d="M7.5 6.5 L7.5 13" stroke="#4a0a5c" stroke-width="1.3"/></svg>
<div class="t" style="left:77.8px;top:512.2px;font-size:14px;font-weight:bold;-webkit-text-stroke:0.35px #e8241c;color:#e8241c;transform-origin:0 0;transform:scaleX(1.139);">Zsled_BuildZsled_Build2.r</div>
<svg class="abs" style="left:32px;top:535px" width="9" height="14" viewBox="0 0 9 14"><path d="M1.2 1 L7.8 7 L1.2 13 Z" stroke="#ec3e36" stroke-width="1.05" fill="none"/></svg>
<div class="t" style="left:45.2px;top:534.0px;font-size:14.0px;font-weight:bold;-webkit-text-stroke:0.35px;color:#000;transform-origin:0 0;transform:scaleX(0.924);">u</div>
<svg class="abs" style="left:58px;top:532px" width="16" height="20" viewBox="0 0 16 20"><path d="M3 2.5 L11 0.5 L15 2.5 L15.5 13 L12.5 15.5 L9.5 16 L5.5 19.5 L2.5 17 L0.5 13.5 L1 5 Z" fill="#7a1590"/><path d="M3 2.5 L11 0.5 L15 2.5 L8 5 Z" fill="#8a20a0"/><path d="M1 5 L5 7 L5.5 19 L2.5 17 L0.5 13.5Z" fill="#5e0e74"/><ellipse cx="9.8" cy="8.6" rx="2.8" ry="2.2" fill="#f040f0"/><path d="M7.5 6.5 L7.5 13" stroke="#4a0a5c" stroke-width="1.3"/></svg>
<div class="t" style="left:77.8px;top:535.2px;font-size:14px;font-weight:bold;-webkit-text-stroke:0.35px #e8241c;color:#e8241c;transform-origin:0 0;transform:scaleX(1.139);">Zsled_HardwareZsled_Hardware4.r</div>
<svg class="abs" style="left:32px;top:558px" width="9" height="14" viewBox="0 0 9 14"><path d="M1.2 1 L7.8 7 L1.2 13 Z" stroke="#ec3e36" stroke-width="1.05" fill="none"/></svg>
<div class="t" style="left:45.2px;top:557.0px;font-size:14.0px;font-weight:bold;-webkit-text-stroke:0.35px;color:#000;transform-origin:0 0;transform:scaleX(0.924);">u</div>
<svg class="abs" style="left:58px;top:555px" width="16" height="20" viewBox="0 0 16 20"><path d="M3 2.5 L11 0.5 L15 2.5 L15.5 13 L12.5 15.5 L9.5 16 L5.5 19.5 L2.5 17 L0.5 13.5 L1 5 Z" fill="#7a1590"/><path d="M3 2.5 L11 0.5 L15 2.5 L8 5 Z" fill="#8a20a0"/><path d="M1 5 L5 7 L5.5 19 L2.5 17 L0.5 13.5Z" fill="#5e0e74"/><ellipse cx="9.8" cy="8.6" rx="2.8" ry="2.2" fill="#f040f0"/><path d="M7.5 6.5 L7.5 13" stroke="#4a0a5c" stroke-width="1.3"/></svg>
<div class="t" style="left:77.8px;top:558.2px;font-size:14px;font-weight:bold;-webkit-text-stroke:0.35px #e8241c;color:#e8241c;transform-origin:0 0;transform:scaleX(1.139);">Zsled_BuildZsled_Build2.r</div>
<svg class="abs" style="left:32px;top:581px" width="9" height="14" viewBox="0 0 9 14"><path d="M1.2 1 L7.8 7 L1.2 13 Z" stroke="#ec3e36" stroke-width="1.05" fill="none"/></svg>
<div class="t" style="left:45.2px;top:580.0px;font-size:14.0px;font-weight:bold;-webkit-text-stroke:0.35px;color:#000;transform-origin:0 0;transform:scaleX(0.924);">u</div>
<svg class="abs" style="left:58px;top:578px" width="16" height="20" viewBox="0 0 16 20"><path d="M3 2.5 L11 0.5 L15 2.5 L15.5 13 L12.5 15.5 L9.5 16 L5.5 19.5 L2.5 17 L0.5 13.5 L1 5 Z" fill="#7a1590"/><path d="M3 2.5 L11 0.5 L15 2.5 L8 5 Z" fill="#8a20a0"/><path d="M1 5 L5 7 L5.5 19 L2.5 17 L0.5 13.5Z" fill="#5e0e74"/><ellipse cx="9.8" cy="8.6" rx="2.8" ry="2.2" fill="#f040f0"/><path d="M7.5 6.5 L7.5 13" stroke="#4a0a5c" stroke-width="1.3"/></svg>
<div class="t" style="left:77.8px;top:581.2px;font-size:14px;font-weight:bold;-webkit-text-stroke:0.35px #e8241c;color:#e8241c;transform-origin:0 0;transform:scaleX(1.139);">Zsled_HardwareZsled_Hardware4.r</div>
<svg class="abs" style="left:32px;top:604px" width="9" height="14" viewBox="0 0 9 14"><path d="M1.2 1 L7.8 7 L1.2 13 Z" stroke="#ec3e36" stroke-width="1.05" fill="none"/></svg>
<div class="t" style="left:45.2px;top:603.0px;font-size:14.0px;font-weight:bold;-webkit-text-stroke:0.35px;color:#000;transform-origin:0 0;transform:scaleX(0.924);">u</div>
<svg class="abs" style="left:58px;top:601px" width="16" height="20" viewBox="0 0 16 20"><path d="M3 2.5 L11 0.5 L15 2.5 L15.5 13 L12.5 15.5 L9.5 16 L5.5 19.5 L2.5 17 L0.5 13.5 L1 5 Z" fill="#7a1590"/><path d="M3 2.5 L11 0.5 L15 2.5 L8 5 Z" fill="#8a20a0"/><path d="M1 5 L5 7 L5.5 19 L2.5 17 L0.5 13.5Z" fill="#5e0e74"/><ellipse cx="9.8" cy="8.6" rx="2.8" ry="2.2" fill="#f040f0"/><path d="M7.5 6.5 L7.5 13" stroke="#4a0a5c" stroke-width="1.3"/></svg>
<div class="t" style="left:77.8px;top:604.2px;font-size:14px;font-weight:bold;-webkit-text-stroke:0.35px #e8241c;color:#e8241c;transform-origin:0 0;transform:scaleX(1.139);">Zsled_HardwareZsled_Hardware4.r</div>
<svg class="abs" style="left:32px;top:627px" width="9" height="14" viewBox="0 0 9 14"><path d="M1.2 1 L7.8 7 L1.2 13 Z" stroke="#ec3e36" stroke-width="1.05" fill="none"/></svg>
<div class="t" style="left:45.2px;top:626.0px;font-size:14.0px;font-weight:bold;-webkit-text-stroke:0.35px;color:#000;transform-origin:0 0;transform:scaleX(0.924);">u</div>
<svg class="abs" style="left:58px;top:624px" width="16" height="20" viewBox="0 0 16 20"><path d="M3 2.5 L11 0.5 L15 2.5 L15.5 13 L12.5 15.5 L9.5 16 L5.5 19.5 L2.5 17 L0.5 13.5 L1 5 Z" fill="#7a1590"/><path d="M3 2.5 L11 0.5 L15 2.5 L8 5 Z" fill="#8a20a0"/><path d="M1 5 L5 7 L5.5 19 L2.5 17 L0.5 13.5Z" fill="#5e0e74"/><ellipse cx="9.8" cy="8.6" rx="2.8" ry="2.2" fill="#f040f0"/><path d="M7.5 6.5 L7.5 13" stroke="#4a0a5c" stroke-width="1.3"/></svg>
<div class="t" style="left:77.8px;top:627.2px;font-size:14px;font-weight:bold;-webkit-text-stroke:0.35px #e8241c;color:#e8241c;transform-origin:0 0;transform:scaleX(1.139);">Zsled_HardwareZsled_Hardware4.r</div>
<svg class="abs" style="left:32px;top:650px" width="9" height="14" viewBox="0 0 9 14"><path d="M1.2 1 L7.8 7 L1.2 13 Z" stroke="#ec3e36" stroke-width="1.05" fill="none"/></svg>
<div class="t" style="left:45.2px;top:649.0px;font-size:14.0px;font-weight:bold;-webkit-text-stroke:0.35px;color:#000;transform-origin:0 0;transform:scaleX(0.924);">u</div>
<svg class="abs" style="left:58px;top:647px" width="16" height="20" viewBox="0 0 16 20"><path d="M3 2.5 L11 0.5 L15 2.5 L15.5 13 L12.5 15.5 L9.5 16 L5.5 19.5 L2.5 17 L0.5 13.5 L1 5 Z" fill="#7a1590"/><path d="M3 2.5 L11 0.5 L15 2.5 L8 5 Z" fill="#8a20a0"/><path d="M1 5 L5 7 L5.5 19 L2.5 17 L0.5 13.5Z" fill="#5e0e74"/><ellipse cx="9.8" cy="8.6" rx="2.8" ry="2.2" fill="#f040f0"/><path d="M7.5 6.5 L7.5 13" stroke="#4a0a5c" stroke-width="1.3"/></svg>
<div class="t" style="left:77.8px;top:650.2px;font-size:14px;font-weight:bold;-webkit-text-stroke:0.35px #e8241c;color:#e8241c;transform-origin:0 0;transform:scaleX(1.139);">Zsled_Dremel</div>
</div>
<div class="abs" style="left:183px;top:140px;width:1px;height:631px;background:#d3d1cb;"></div><div class="abs" style="left:184px;top:140px;width:16px;height:631px;background:#b7b3a9;box-shadow:inset 1.5px 1px 0 #a39f96;"></div>
<div class="abs" style="left:186px;top:141px;width:13px;height:14px;background:#dcdad5;box-shadow:inset 1px 1px 0 #f4f3f0,inset -1px -1px 0 #9e9a91;"></div>
<svg class="abs" style="left:188px;top:144px" width="9" height="6"><path d="M0 5.5 L4.5 0.5 L9 5.5Z" fill="#000"/></svg>
<div class="abs" style="left:186px;top:155px;width:13px;height:94px;background:#dcdad5;box-shadow:inset 1px 1px 0 #f4f3f0,inset -1px -1px 0 #9e9a91;"></div>
<div class="abs" style="left:188px;top:198px;width:9px;height:1px;background:#9e9a91;box-shadow:0 1px 0 #fff,0 3px 0 #9e9a91,0 4px 0 #fff,0 6px 0 #9e9a91,0 7px 0 #fff;"></div>
<div class="abs" style="left:186px;top:757px;width:13px;height:13px;background:#dcdad5;box-shadow:inset 1px 1px 0 #f4f3f0,inset -1px -1px 0 #9e9a91;"></div>
<svg class="abs" style="left:188px;top:761px" width="9" height="6"><path d="M0 0.5 L4.5 5.5 L9 0.5Z" fill="#000"/></svg>
<div class="abs" style="left:0;top:771px;width:200px;height:14px;background:#bab5ab;"></div>
<div class="abs" style="left:0px;top:771px;width:13px;height:13px;background:#dcdad5;box-shadow:inset 1px 1px 0 #f4f3f0,inset -1px -1px 0 #9e9a91;"></div>
<svg class="abs" style="left:3px;top:773px" width="6" height="9"><path d="M5.5 0 L0.5 4.5 L5.5 9Z" fill="#000"/></svg>
<div class="abs" style="left:14px;top:771px;width:170px;height:13px;background:#dcdad5;box-shadow:inset 1px 1px 0 #f4f3f0,inset -1px -1px 0 #9e9a91;"></div>
<div class="abs" style="left:96px;top:773px;width:1px;height:9px;background:#9e9a91;box-shadow:1px 0 0 #fff,3px 0 0 #9e9a91,4px 0 0 #fff,6px 0 0 #9e9a91,7px 0 0 #fff;"></div>
<div class="abs" style="left:186px;top:771px;width:13px;height:13px;background:#dcdad5;box-shadow:inset 1px 1px 0 #f4f3f0,inset -1px -1px 0 #9e9a91;"></div>
<svg class="abs" style="left:190px;top:773px" width="6" height="9"><path d="M0.5 0 L5.5 4.5 L0.5 9Z" fill="#000"/></svg>
<div class="abs" style="left:199px;top:116px;width:1.4px;height:669px;background:#a8a49b;"></div><div class="abs" style="left:200.6px;top:116px;width:3.4px;height:669px;background:#f8f7f5;"></div>

<!-- ===== 3D VIEW ===== -->
<svg class="abs" style="left:204px;top:116px;" width="839" height="668" viewBox="204 116 839 668">
<rect x="204" y="116" width="839" height="668" fill="#000032"/>
<!-- wires -->
<!-- TABLE -->
<polygon points="298,574 760,367 1010,540 645,701 298,603" fill="#3e2e0e"/>
<polygon points="298,600 645,699 655,755 314,658" fill="#533c12"/>
<polygon points="645,699 965,555 965,617 655,755" fill="#654a19"/>
<!-- left post -->
<polygon points="245,524 306,497 311,498.5 321,562 303,571 296,539" fill="#7a1428"/>
<polygon points="238.7,526 245,522 296,537.5 290,540" fill="#20264a"/>
<polygon points="238.7,526 290,540 309,660 256,647.5" fill="#1b1f3a"/>
<polygon points="290,540 295.5,538.5 314,657.5 309,660" fill="#262c52"/>
<polygon points="239,531 290,542.5 290,556 241,550" fill="#5a4a18"/>
<polygon points="241,551 290,557.5 291,572.5 244,564" fill="#7a1a8a"/>
<ellipse cx="256" cy="534.5" rx="4" ry="3" fill="#c8c030"/>
<ellipse cx="269.5" cy="537.5" rx="4" ry="3" fill="#30a0b0"/>
<circle cx="246.5" cy="559.5" r="3.5" fill="#b070b0"/>
<circle cx="272.5" cy="566" r="3.5" fill="#a020c0"/>
<rect x="278" y="544" width="9" height="9" fill="#6a5a20"/>
<rect x="280" y="561" width="8" height="8" fill="#6a1a70"/>
<!-- teal square -->
<polygon points="386,497 412.5,502.5 415,525 390,517.5" fill="#4a9a78"/>
<!-- LEFT ASSEMBLY -->
<polygon points="456,415 466,418 472,483 462,480" fill="#06060f"/>
<polygon points="465,423.5 484,428.5 491,486 471,481" fill="#2a7a9a"/>
<polygon points="512,271 552,255 590,450 491,491 490,420" fill="#9398a8"/>
<polygon points="474,261 512,271 490,420 452,412" fill="#0d1a10"/>
<g fill="#8a90a0"><rect x="498.6" y="293" width="3" height="9.5" transform="rotate(8 500 298)"/><rect x="495.4" y="310.8" width="3" height="7.6" transform="rotate(8 497 314)"/></g>
<polygon points="455.9,270.8 457.8,265.8 474.3,257.5 473.6,262 469.2,297.5 460.3,296.2" fill="#8a8a38"/>
<polygon points="450.2,301.3 460.3,296.2 467.3,298.8 464.1,325.4 454,326.7" fill="#3e9a44"/><polygon points="459.5,297 467.3,298.8 464.1,325.4 458.5,326" fill="#3a9a6c"/>
<polygon points="539.6,265 556,256 574,350 550,337" fill="#6e6c40"/>
<polygon points="481,256 530,270 512.3,272 474.3,261" fill="#030a05"/>
<polygon points="480.6,253 518,235.3 552.3,247 552.3,256 528.8,267.7" fill="#6e5e70"/>
<polygon points="480.6,253 528.8,266 552.3,253.5 552.3,258 528.8,270.5 480.6,256.6" fill="#bc9ebc"/>
<polygon points="518,232.8 547.4,220.7 550,251.8 522.5,260.7" fill="#a2aa58"/>
<polygon points="531.4,293.7 545.3,289.9 550.4,315.3 537.7,321" fill="#999dae" stroke="#a9adba" stroke-width="1"/>
<polygon points="512.5,354 555,339 566,345 530,362.5" fill="#6ea050"/>
<polygon points="512.5,354 530,362.5 530,366 512.5,357.5" fill="#5a8a40"/>
<polygon points="540,362.5 566,350 570,370 545,380" fill="#4a1510"/>
<polygon points="531,397 574,386 582.5,440 541,455" fill="#78b038"/>
<circle cx="566" cy="395" r="4.5" fill="none" stroke="#b08a90" stroke-width="2"/>
<circle cx="552.5" cy="437" r="5.5" fill="#6a5a60" stroke="#3aa0c0" stroke-width="2"/>
<rect x="492.5" y="446" width="3" height="9" fill="#4aa0c8"/><rect x="494" y="460" width="3" height="9" fill="#4aa0c8"/>
<path d="M354 505 L456 471 L468.6 414 L455 328" stroke="#5e0c1a" stroke-width="1.7" fill="none"/>
<path d="M461 328 L472.5 408" stroke="#5e0c1a" stroke-width="1.5" fill="none"/>
<g fill="#8a90a0"><rect x="485.5" y="372" width="2.8" height="8" transform="rotate(8 487 376)"/><rect x="482.8" y="389" width="2.8" height="8" transform="rotate(8 484 393)"/></g>
<polygon points="439,495 482.5,476 489,487 445,506" fill="#c07830"/>
<polygon points="445,506 489,487 491,492 447,511" fill="#5a5a20"/>
<polygon points="436,497 441,494 447,508 441,511" fill="#40b0b0" stroke="#c0208a" stroke-width="1.2"/>
<ellipse cx="470" cy="500" rx="5" ry="4" fill="#a0a890"/>
<!-- rails -->
<polygon points="302,579 590,450 590,455.5 303,584.5" fill="#d028c6"/>
<polygon points="303,584.5 590,455.5 590,461 304,590" fill="#a01c96"/>
<polygon points="709,644 946,534 946.5,539.5 710,648" fill="#a83c2c"/>
<polygon points="710,648 946.5,539.5 947,545 711,652" fill="#74281c"/>
<!-- GANTRY inner contents -->
<polygon points="591,296 652.5,313.5 682.5,506 620,490" fill="#46567c"/>
<polygon points="592,297 600.5,299.5 600,303 593.5,302.7" fill="#b0b030"/>
<polygon points="600.5,301.4 617,304.6 606.8,311.6 595.4,311" fill="#5a4ab8"/>
<polygon points="608,311 619.5,304.6 638,310 638.5,321.7" fill="#4a6a90"/>
<polygon points="637,311 651,313.5 653,325.5 638.5,321.7" fill="#7a4a10"/>
<polygon points="594.7,312 653,326.8 660.7,374.4 601.7,357" fill="#7d5a78"/>
<g fill="#2a1a30"><circle cx="613.8" cy="355.4" r="1.8"/><circle cx="624.6" cy="358.5" r="1.8"/><circle cx="641" cy="363" r="1.8"/><circle cx="651.2" cy="366" r="1.8"/></g>
<polygon points="602,357 610,360 622,437 615,437" fill="#a8a830"/>
<polygon points="610.6,360.4 646,371 647.4,377.5 614.4,390" fill="#4a5a80"/>
<polygon points="646,371 660.7,375 662,381 648,377.5" fill="#7a4a10"/>
<polygon points="617,390 647.4,377.5 662.6,381.4 667,407.4 658.8,410.5 636,395" fill="#5a7a80"/>
<polygon points="604,389 659,402 660,419 608,404" fill="#a89038"/>
<polygon points="620,408 630,410 632,438 623,436" fill="#6a7aa8"/>
<polygon points="634,411 665,418 668,455 671,516 655,521 645,496 636,450" fill="#050505"/>
<polygon points="635,411 647.5,414 647.5,418 636,416" fill="#6030c0"/>
<polygon points="665,426 672.5,428 674,451 668,450" fill="#4a4aa0"/>
<polygon points="670,461 678,463 681,491 672,489" fill="#c08030"/>
<!-- GANTRY faces -->
<polygon points="547.5,223.7 670,167.5 789,204 671,260" fill="#070300"/>
<polygon points="680,188 735,200 735,202.5 680,190.5" fill="#7a4a10"/>
<polygon points="547.5,223.7 671,260 695,413 712.5,516 682.5,506 667.7,420 652.5,313.5 591,296 612,420 622,491 590,482 576,386" fill="#070d02"/>
<polygon points="671,260 789,204 804,305 807,318 753,302 751,274.6 726,287 742.5,393 757.5,489 712.5,512 695,413" fill="#55649b"/>
<!-- motor -->
<polygon points="619.5,143 624,142.5 626,162 621.5,163" fill="#b8a898"/>
<polygon points="601,165 630.7,153.7 648.2,158.9 621.6,170.4" fill="#b2a290"/>
<polygon points="601,165 621.6,170.4 631,232 608,227" fill="#a99886"/>
<polygon points="621.6,170.4 648.2,158.9 661.6,218.7 631,232" fill="#a08e7c"/><path d="M621.8 170.6 L631.2 232" stroke="#c2b2a2" stroke-width="1.4"/>
<polygon points="606,224.5 631,231.5 662,217.5 662.8,221 631,236.4 606.4,228.5" fill="#b4a494"/>
<g fill="#7a88b8"><rect x="666" y="290" width="2.4" height="6"/><rect x="668.4" y="304" width="2.4" height="8"/><rect x="680.4" y="374.6" width="2.4" height="7"/><rect x="683" y="388" width="2.4" height="8"/></g>
<g fill="#01030a"><rect x="684" y="391" width="2" height="5"/><rect x="694.6" y="456" width="2.2" height="6"/><rect x="697" y="473" width="2.2" height="6"/></g>
<g fill="#0a0a12"><rect x="721.6" y="287" width="3" height="7"/><rect x="723.6" y="303" width="3" height="6.5"/><rect x="735" y="369" width="3.2" height="6.5"/><rect x="738" y="383.5" width="3.2" height="7"/></g>
<g fill="#96a838"><rect x="565" y="231" width="3" height="1.6"/><rect x="576" y="268" width="1.6" height="1.6"/><rect x="582" y="300" width="1.6" height="1.6"/><rect x="586" y="339" width="1.6" height="1.6"/></g>
<!-- carriage -->
<polygon points="604,437 665,452 671,501 610,485" fill="#22303a"/>
<g fill="#5a5aa0"><rect x="609" y="444" width="3" height="3"/><rect x="617" y="447" width="3" height="3"/><rect x="647" y="455" width="3" height="3"/><rect x="655" y="457" width="3" height="3"/></g>
<g fill="#c08838"><rect x="614" y="477" width="3.5" height="3.5"/><rect x="624" y="480" width="3.5" height="3.5"/><rect x="650" y="487" width="3.5" height="3.5"/><rect x="659" y="490" width="3.5" height="3.5"/></g>
<g fill="#4a8a50"><rect x="597" y="477" width="3" height="3"/><rect x="606" y="480" width="3" height="3"/><rect x="685" y="502" width="3.5" height="3.5"/><rect x="697" y="505.5" width="3.5" height="3.5"/></g>
<polygon points="645,496 670,501 671,516 655,521" fill="#050505"/>
<polygon points="660,521 667,520 668,533 664,534" fill="#2050c0"/>
<polygon points="664.5,533.5 668,533 668,542" fill="#d080a0"/>
<!-- RIGHT ASSEMBLY -->
<polygon points="726.3,287 751,274.6 753.5,300 727,294" fill="#3a7a68"/>
<polygon points="728,285 741,279 736,288" fill="#8030a0"/>
<polygon points="727,297 807.6,318 807.6,331.5 728.5,309.5" fill="#a08890"/>
<polygon points="727.5,292 806,311 806,319 726.7,298" fill="#8a3a10"/>
<polygon points="728.5,309 812,332 806,409 741.4,391" fill="#646238"/>
<polygon points="741.4,390.8 803,408 802,414.5 742.4,397" fill="#5a9450"/>
<polygon points="742.4,396.5 782,408 748,423" fill="#2a48b4"/><polygon points="752,400 776,407 760,410" fill="#3a8a90"/><polygon points="745,410 760,410 748,422" fill="#4a22a0"/>
<polygon points="754.5,466 781.4,454 792,474 757,490" fill="#2e627a"/><polygon points="780,447 796,449 792,475 782,470" fill="#5a70a8"/><polygon points="771,459 780,455 783,468 774,472" fill="#3a8a78"/>
<polygon points="728.7,431 781,408.6 800.5,413.5 795,449 738.2,474.5" fill="#a69032"/>
<polygon points="711.6,507 790.3,475.8 790.3,481.5 712.5,513" fill="#4caad2"/>
<polygon points="723.6,498 738.9,492.5 739.5,496.8 724.3,502.5" fill="#6aa860"/>
<polygon points="846,362 920,326 946,493 946,537 828,589 817,521" fill="#03100f"/>
<polygon points="803.6,304 817,298.4 828,301.6 806.8,312.7" fill="#1a3048"/>
<polygon points="799,344 871,309 920,324 844,360" fill="#9c8494"/>
<polygon points="799,344 844,360 920,324 920,327.5 844,364 799,347.5" fill="#c0a8c0"/>
<polygon points="806,314 865,290 870,319 811,342.5" fill="#5c74b0"/>
<polygon points="838,322 852,326 854,333 840,330" fill="#b05010"/>
<g stroke="#d040b0" stroke-width="1.5"><path d="M822,345 L832,340"/><path d="M857,334 L866,330"/><path d="M874,328 L882,324"/></g>
<polygon points="817.5,354 841,361 841,365 817.5,358.5" fill="#e020b0"/>
<polygon points="809,357.5 845,364 822.5,518.5 786,510" fill="#4f2029"/>
<polygon points="847.5,362.5 907.5,332.5 917.5,386 939,530 879,553.5 850,386" fill="#6b5d9d"/>
<polygon points="883.7,393.7 910.7,398.5 910.7,402.5 883.7,397.5" fill="#5a30c0"/>
<g fill="#c07868"><rect x="890.6" y="361.5" width="2.4" height="7.5"/><rect x="893.2" y="375.7" width="2.4" height="6.5"/><rect x="897" y="404" width="2.4" height="6.5"/><rect x="899.6" y="419.5" width="2.4" height="6.5"/></g>
<g fill="#a09a38"><rect x="879" y="366.6" width="2.4" height="6.5"/><rect x="881.6" y="382" width="2.4" height="5.5"/><rect x="885.4" y="409" width="2.4" height="6.5"/><rect x="888" y="423" width="2.4" height="8"/></g>
<g fill="#4a4078"><circle cx="872" cy="385" r="1.1"/><circle cx="900.4" cy="373" r="1.1"/><circle cx="877.2" cy="418" r="1.1"/><circle cx="910.7" cy="422" r="1.1"/><circle cx="878.5" cy="437.5" r="1.1"/><circle cx="885" cy="480" r="1.1"/><circle cx="918.5" cy="464.6" r="1.1"/></g>
<circle cx="889" cy="390" r="2" fill="#d040a0"/><circle cx="888" cy="389" r="1" fill="#40d060"/>
<circle cx="900" cy="491" r="5" fill="#50b060" stroke="#3a8a80" stroke-width="2"/>
<circle cx="917.5" cy="520" r="5" fill="#707020" stroke="#90b030" stroke-width="2"/>
<circle cx="887.5" cy="533.5" r="5" fill="#6a8a30" stroke="#c0b020" stroke-width="2"/>
<g fill="#30a0a0"><rect x="919" y="347" width="3" height="8"/><rect x="921.5" y="363" width="3" height="7"/><rect x="918.5" y="381" width="3.5" height="12"/><rect x="932" y="419.5" width="3" height="6"/><rect x="933.5" y="432" width="3" height="8"/><rect x="942" y="489" width="3" height="8"/></g>
<g fill="#d040a0"><rect x="808.3" y="381" width="2.6" height="8"/><rect x="805" y="399" width="2.6" height="6"/><rect x="796" y="461" width="2.6" height="8"/><rect x="793" y="478" width="2.6" height="7"/></g>
<g fill="#0a2a2a"><rect x="832.6" y="389" width="2.8" height="7.5"/><rect x="830.6" y="405.4" width="2.8" height="7.5"/><rect x="821.2" y="468" width="2.8" height="8"/><rect x="818" y="484" width="2.8" height="8"/></g>
<polygon points="791,511 816,517 825,583.5 802.5,576" fill="#d030a0"/>
<polygon points="798.7,518.5 816,522 825,578.5 806,573.5" fill="#38808c"/>
<g fill="#40b8c8"><rect x="824" y="542" width="3" height="7"/><rect x="827" y="558" width="3" height="7"/></g>
<polygon points="774,590 819,572 825,583.5 782.5,603.5" fill="#6a78b8"/>
<polygon points="782.5,603.5 825,583.5 827,588 785,608" fill="#6a6a30"/>
<polygon points="771,594 774,590 782.5,603.5 779,607" fill="#7020c0" stroke="#4a8a40" stroke-width="1"/>
<circle cx="790" cy="606" r="4" fill="#c03020"/><circle cx="791" cy="607" r="1.8" fill="#3a7a40"/>
<polygon points="721,592 747.5,597.5 750,620 724,614" fill="#6a509a"/>
<!-- RED POST -->
<polygon points="955,460 972.5,451 1011,462 1005,472 960,491" fill="#5a4e58"/>
<polygon points="955,460 972.5,451 1011,462 996,468.5" fill="#6a6270"/>
<rect x="958" y="480" width="5" height="4" fill="#8a8a20"/>
<ellipse cx="979" cy="453.5" rx="4" ry="3.2" fill="#c060a0"/>
<ellipse cx="992.5" cy="457" rx="4" ry="3.2" fill="#40a0b0"/>
<polygon points="940,500 1005,472 1025,593.5 965,621" fill="#6d1315"/>
<polygon points="940,500 946,497.5 971,618.2 965,621" fill="#7c1a1c"/>
<polygon points="1005,472 1011,470 1032.5,586 1025,593.5" fill="#6a5a60"/>
<!-- FRONT POST -->
<polygon points="591,624 636,636 655,760 604,745 591,665" fill="#7f1969"/>
<polygon points="636,636 645,636 662.5,756 655,760" fill="#b02098"/>
<polygon points="637.5,635 699,609 705,610 645,636" fill="#3e7028"/>
<polygon points="645,636 705,610 724,730 662.5,756" fill="#4b7f31"/>
<polygon points="574,632.5 586,626 622.5,637.5 624,650 575,646" fill="#5a9030"/>
<polygon points="575,646 624,650 625,665 615,669 576,657.5" fill="#4a4a20"/>
<ellipse cx="590.5" cy="630.5" rx="4" ry="3" fill="#88b0b0"/>
<ellipse cx="604" cy="634" rx="4" ry="3" fill="#a0a020"/>
<circle cx="580.5" cy="654.5" r="3.5" fill="#7a2030"/>
<circle cx="606" cy="661" r="3.5" fill="#c080a0"/>
<rect x="613" y="641" width="8" height="7" fill="none" stroke="#7ab048" stroke-width="1"/>
<!-- AXES -->
<path d="M981 735 L974 697.5" stroke="#0000e6" stroke-width="1.6" fill="none"/>
<path d="M981 735 L1012.5 720.4" stroke="#40c020" stroke-width="1.6" fill="none"/>
<path d="M981 735 L1007.7 742.3" stroke="#d02010" stroke-width="1.6" fill="none"/>
<path d="M977 682.5 H984.8 L977 692 H984.8" stroke="#0000f0" stroke-width="1.5" fill="none"/>
<path d="M1017 706 L1020.3 711 L1023.7 706 M1020.3 711 V716.5" stroke="#40c020" stroke-width="1.4" fill="none"/>
<path d="M1010.5 729 L1018 739 M1018 729 L1010.5 739" stroke="#d02010" stroke-width="1.4" fill="none"/>
</svg>


<!-- ===== RIGHT PANEL ===== -->
<div class="abs" style="left:1043px;top:116px;width:3px;height:669px;background:#dcdad5;"></div>
<div class="abs" style="left:1046px;top:116px;width:2px;height:669px;background:#f6f5f3;"></div>
<div class="abs" style="left:1054px;top:122px;width:31px;height:32px;background:#efeeec;box-shadow:inset 1px 1px 0 #a39f96,inset -1px -1px 0 #fff;"></div>
<div class="abs" style="left:1085px;top:122px;width:31px;height:32px;box-shadow:inset 1px 1px 0 #f4f3f0,inset -1px -1px 0 #a8a49b;"></div>
<div class="abs" style="left:1116px;top:122px;width:31px;height:32px;box-shadow:inset 1px 1px 0 #f4f3f0,inset -1px -1px 0 #a8a49b;"></div>
<div class="abs" style="left:1147px;top:122px;width:31px;height:32px;box-shadow:inset 1px 1px 0 #f4f3f0,inset -1px -1px 0 #a8a49b;"></div>
<svg class="abs" style="left:1050px;top:120px;" width="130" height="36" viewBox="1050 120 130 36">
<!-- 1 -->
<rect x="1057.7" y="126.2" width="21.6" height="24.3" fill="#bcb4f2"/>
<rect x="1060" y="142" width="12" height="6" fill="#d4d0f8"/>
<circle cx="1065.8" cy="133.4" r="5.4" fill="#4e7ef0"/>
<ellipse cx="1064.4" cy="131.6" rx="2.4" ry="1.6" fill="#c8dcff"/>
<path d="M1058 137 Q1066 141 1074 135" stroke="#8a8ae8" stroke-width="1.4" fill="none"/>
<path d="M1065.6 148.2 L1078.2 137.6" stroke="#d2823e" stroke-width="3.6"/>
<path d="M1076.6 139 L1079.6 136.4" stroke="#d02a2a" stroke-width="3.6"/>
<path d="M1063.6 150 L1066 147.8" stroke="#7a5a3a" stroke-width="2"/>
<!-- 2 -->
<rect x="1088.4" y="126.2" width="21.8" height="24" fill="#fdfdfd" stroke="#5e5e5e" stroke-width="1.6"/>
<rect x="1088.4" y="126.2" width="21.8" height="3.4" fill="#8a8a8a"/>
<rect x="1088.4" y="146.6" width="21.8" height="3.6" fill="#9a9a9a"/>
<path d="M1090.8 132.6 H1098.6 M1094.7 132.6 V143 M1092.6 143 H1096.8" stroke="#111" stroke-width="1.8" fill="none"/>
<path d="M1101 133 H1108 M1101 136.4 H1108 M1101 139.8 H1108 M1101 143.2 H1108" stroke="#9a9a9a" stroke-width="1.6"/>
<!-- 3 -->
<circle cx="1129" cy="137.8" r="10.6" fill="#c9c9c9" stroke="#5a5a5a" stroke-width="3.4" stroke-dasharray="3.2 2.6"/>
<circle cx="1129" cy="137.8" r="9.6" fill="#cdcdcd"/>
<path d="M1117.6 131 L1140 147.4" stroke="#6a747c" stroke-width="3"/>
<path d="M1116.4 127.6 L1120 133.4" stroke="#6a747c" stroke-width="2.6"/>
<path d="M1132 136.6 L1140.4 125.6" stroke="#7a848c" stroke-width="2.2"/>
<path d="M1121.4 147.6 L1131.6 137.2" stroke="#a62a22" stroke-width="5.2" stroke-linecap="round"/>
<!-- 4 -->
<path d="M1148.4 141.4 L1160.2 136 L1174.4 139.2 L1162.4 147.4Z" fill="#2c4c94"/>
<path d="M1152 142 L1162.6 149 L1168 145.2" stroke="#4a6ab0" stroke-width="1" fill="none"/>
<ellipse cx="1159" cy="131.4" rx="2.6" ry="3.8" fill="none" stroke="#d6d044" stroke-width="1.5"/>
<circle cx="1160.4" cy="134" r="1.8" fill="#30c060"/>
<circle cx="1166.2" cy="136.6" r="1.9" fill="#3aa0a0"/>
<circle cx="1157" cy="139.2" r="1.7" fill="#e070d0"/>
</svg>

<div class="abs" style="left:1049px;top:159px;width:208px;height:1px;background:#a39f96;"></div><div class="abs" style="left:1049px;top:160px;width:208px;height:1px;background:#f4f3f0;"></div>
<div class="abs" style="left:1050px;top:163px;width:40px;height:28px;background:#dcdad5;box-shadow:inset 1px 1px 0 #f4f3f0,inset -1px 0 0 #a39f96;"></div>
<div class="t" style="left:1058.0px;top:171.2px;font-size:14.2px;color:#000;transform-origin:0 0;transform:scaleX(1.006);">Gen</div>
<div class="abs" style="left:1091px;top:165px;width:38px;height:25px;background:#c3bfb6;box-shadow:inset 1px 1px 0 #d6d3cc,inset -1px 0 0 #a39f96;"></div>
<div class="t" style="left:1099.5px;top:171.2px;font-size:14.2px;color:#000;transform-origin:0 0;transform:scaleX(1.088);">Sha</div>
<div class="abs" style="left:1131px;top:165px;width:51px;height:25px;background:#c3bfb6;box-shadow:inset 1px 1px 0 #d6d3cc,inset -1px 0 0 #a39f96;"></div>
<div class="t" style="left:1139.5px;top:171.2px;font-size:14.2px;color:#000;transform-origin:0 0;transform:scaleX(1.062);">Mem</div>
<div class="abs" style="left:1184px;top:165px;width:73px;height:25px;background:#c3bfb6;box-shadow:inset 1px 1px 0 #d6d3cc,inset -1px 0 0 #a39f96;"></div>
<div class="t" style="left:1192.0px;top:171.2px;font-size:14.2px;color:#000;transform-origin:0 0;transform:scaleX(1.072);">Relative</div>
<div class="abs" style="left:1091px;top:190px;width:166px;height:1px;background:#f4f3f0;"></div>
<div class="abs" style="left:1256px;top:163px;width:1px;height:309px;background:#a39f96;"></div>
<div class="t" style="left:1052.0px;top:198.0px;font-size:11.8px;font-weight:bold;-webkit-text-stroke:0.35px;color:#000;transform-origin:0 0;transform:scaleX(1.100);">Combination: diylilcnc.g</div>
<div class="t" style="left:1084.7px;top:219.4px;font-size:14.0px;color:#000;transform-origin:0 0;transform:scaleX(1.063);">Region:</div>
<div class="abs" style="left:1138px;top:215px;width:117px;height:23px;background:#dcdad5;box-shadow:inset 1px 1px 0 #f4f3f0,inset -1px -1px 0 #9e9a91;"></div>
<div class="abs" style="left:1239px;top:216px;width:1px;height:21px;background:#a39f96;box-shadow:1px 0 0 #f4f3f0;"></div>
<svg class="abs" style="left:1243px;top:224px" width="9" height="6"><path d="M0 0.5 L4.5 5.5 L9 0.5Z" fill="#000"/></svg>
<div class="t" style="left:1142.0px;top:220.0px;font-size:14.0px;color:#000;transform-origin:0 0;transform:scaleX(1.060);">no</div>
<div class="t" style="left:1120.0px;top:244.6px;font-size:11.5px;color:#000;transform-origin:0 0;transform:scaleX(1.251);">Id:</div>
<div class="abs" style="left:1138px;top:239px;width:117px;height:23px;background:#fff;box-shadow:inset 1px 1px 0 #8f8b82,inset -1px -1px 0 #c8c5be,inset 2px 2px 0 #c5c2bb;"></div>
<div class="t" style="left:1116.5px;top:268.6px;font-size:11.5px;color:#000;transform-origin:0 0;transform:scaleX(1.130);">Air:</div>
<div class="abs" style="left:1138px;top:263px;width:117px;height:23px;background:#fff;box-shadow:inset 1px 1px 0 #8f8b82,inset -1px -1px 0 #c8c5be,inset 2px 2px 0 #c5c2bb;"></div>
<div class="t" style="left:1112.0px;top:292.6px;font-size:11.5px;color:#000;transform-origin:0 0;transform:scaleX(1.104);">Los:</div>
<div class="abs" style="left:1138px;top:287px;width:117px;height:23px;background:#fff;box-shadow:inset 1px 1px 0 #8f8b82,inset -1px -1px 0 #c8c5be,inset 2px 2px 0 #c5c2bb;"></div>
<div class="t" style="left:1071.0px;top:316.6px;font-size:11.5px;color:#000;transform-origin:0 0;transform:scaleX(1.106);">GIFTmater:</div>
<div class="abs" style="left:1138px;top:311px;width:117px;height:23px;background:#fff;box-shadow:inset 1px 1px 0 #8f8b82,inset -1px -1px 0 #c8c5be,inset 2px 2px 0 #c5c2bb;"></div>
<div class="t" style="left:1110.0px;top:340.6px;font-size:11.5px;color:#000;transform-origin:0 0;transform:scaleX(1.070);">Rgb:</div>
<div class="abs" style="left:1138px;top:335px;width:117px;height:23px;background:#fff;box-shadow:inset 1px 1px 0 #8f8b82,inset -1px -1px 0 #c8c5be,inset 2px 2px 0 #c5c2bb;"></div>
<div class="t" style="left:1085.9px;top:363.4px;font-size:14.0px;color:#000;transform-origin:0 0;transform:scaleX(1.171);">Inherit:</div>
<div class="abs" style="left:1138px;top:359px;width:117px;height:23px;background:#dcdad5;box-shadow:inset 1px 1px 0 #f4f3f0,inset -1px -1px 0 #9e9a91;"></div>
<div class="abs" style="left:1239px;top:360px;width:1px;height:21px;background:#a39f96;box-shadow:1px 0 0 #f4f3f0;"></div>
<svg class="abs" style="left:1243px;top:368px" width="9" height="6"><path d="M0 0.5 L4.5 5.5 L9 0.5Z" fill="#000"/></svg>
<div class="t" style="left:1142.0px;top:364.0px;font-size:14.0px;color:#000;transform-origin:0 0;transform:scaleX(1.060);">no</div>
<div class="abs" style="left:1049px;top:471px;width:208px;height:1px;background:#a39f96;"></div><div class="abs" style="left:1049px;top:472px;width:212px;height:3px;background:#f4f3f0;"></div>
<div class="abs" style="left:1049px;top:476px;width:118px;height:32px;box-shadow:inset 1px 1px 0 #f4f3f0,inset -1px -1px 0 #9e9a91;"></div>
<div class="abs" style="left:1168px;top:476px;width:100px;height:32px;box-shadow:inset 1px 1px 0 #f4f3f0,inset -1px -1px 0 #9e9a91;"></div>
<div class="t" style="left:1087.7px;top:484.2px;font-size:14.5px;color:#000;transform-origin:0 0;transform:scaleX(1.061);">Apply</div>
<div class="t" style="left:1206.8px;top:484.2px;font-size:14.5px;color:#000;transform-origin:0 0;transform:scaleX(1.014);">Reset</div>
<div class="abs" style="left:1049px;top:509px;width:212px;height:1px;background:#f4f3f0;"></div>

<!-- ===== BOTTOM ===== -->
<div class="abs" style="left:0;top:784px;width:1259px;height:1px;background:#a8a49b;"></div><div class="abs" style="left:0;top:785px;width:1261px;height:1px;background:#f4f3f0;"></div><div class="abs" style="left:1258px;top:116px;width:1px;height:669px;background:#a8a49b;"></div>
<div class="abs" style="left:4px;top:789px;width:87px;height:29px;background:#dcdad5;box-shadow:inset 1px 1px 0 #f4f3f0;"></div>
<div class="abs" style="left:91px;top:791px;width:67px;height:26px;background:#c3bfb6;box-shadow:inset 1px 1px 0 #d6d3cc,inset -1px 0 0 #a39f96;"></div>
<div class="t" style="left:9.0px;top:796.8px;font-size:14.2px;color:#000;transform-origin:0 0;transform:scaleX(1.069);">Command</div>
<div class="t" style="left:100.5px;top:796.8px;font-size:14.2px;color:#000;transform-origin:0 0;transform:scaleX(1.086);">History</div>
<div class="abs" style="left:91px;top:817px;width:1168px;height:1px;background:#f4f3f0;"></div>
<div class="abs" style="left:1px;top:817px;width:1241px;height:180px;background:#fff;box-shadow:inset 1px 1px 0 #8f8b82,inset 2px 2px 0 #c5c2bb;"></div>
<div class="mono" style="top:823.4px;">/diylilcnc.g/Zsled_BuildZsled_Build2.r/Zsled_BuildZsled_Build2.s</div>
<div class="mono" style="top:840.7px;">/diylilcnc.g/Zsled_HardwareZsled_Hardware4.r/Zsled_HardwareZsled_Hardware4.s</div>
<div class="mono" style="top:858.0px;">/diylilcnc.g/Zsled_DremelZsled_Dremel2.r/Zsled_DremelZsled_Dremel2.s</div>
<div class="mono" style="top:875.3px;">/diylilcnc.g/Zsled_BuildZsled_Build1.r/Zsled_BuildZsled_Build1.s</div>
<div class="mono" style="top:892.6px;">/diylilcnc.g/Zsled_DremelZsled_Dremel1.r/Zsled_DremelZsled_Dremel1.s</div>
<div class="mono" style="top:909.9px;">/diylilcnc.g/Zsled_HardwareZsled_Hardware3.r/Zsled_HardwareZsled_Hardware3.s</div>
<div class="mono" style="top:927.2px;">/diylilcnc.g/Zsled_HardwareZsled_Hardware2.r/Zsled_HardwareZsled_Hardware2.s</div>
<div class="mono" style="top:944.5px;">/diylilcnc.g/Zsled_HardwareZsled_Hardware1.r/Zsled_HardwareZsled_Hardware1.s</div>
<div class="mono" style="top:979.3px;color:#e8241c;">Archer&gt; </div>
<div class="abs" style="left:69px;top:976.5px;width:7.6px;height:17px;background:#fbfb10;"></div>
<div class="abs" style="left:1242px;top:817px;width:16px;height:180px;background:#b7b3a9;box-shadow:inset 1px 1px 0 #9e9a91;"></div>
<div class="abs" style="left:1243px;top:818px;width:14px;height:15px;background:#dcdad5;box-shadow:inset 1px 1px 0 #f4f3f0,inset -1px -1px 0 #9e9a91;"></div>
<svg class="abs" style="left:1245px;top:822px" width="9" height="6"><path d="M0 5.5 L4.5 0.5 L9 5.5Z" fill="#000"/></svg>
<div class="abs" style="left:1243px;top:963px;width:14px;height:19px;background:#dcdad5;box-shadow:inset 1px 1px 0 #f4f3f0,inset -1px -1px 0 #9e9a91;"></div>
<div class="abs" style="left:1245px;top:967px;width:10px;height:1px;background:#9e9a91;box-shadow:0 1px 0 #fff,0 4px 0 #9e9a91,0 5px 0 #fff,0 8px 0 #9e9a91,0 9px 0 #fff;"></div>
<div class="abs" style="left:1243px;top:982px;width:14px;height:14px;background:#dcdad5;box-shadow:inset 1px 1px 0 #f4f3f0,inset -1px -1px 0 #9e9a91;"></div>
<svg class="abs" style="left:1245px;top:986px" width="9" height="6"><path d="M0 0.5 L4.5 5.5 L9 0.5Z" fill="#000"/></svg>
<div class="abs" style="left:0px;top:1002px;width:919px;height:21px;box-shadow:inset 1px 1px 0 #a39f96,inset -1px -1px 0 #f4f3f0;"></div>
<div class="abs" style="left:924px;top:1002px;width:231px;height:21px;box-shadow:inset 1px 1px 0 #a39f96,inset -1px -1px 0 #f4f3f0;"></div>
<div class="abs" style="left:1160px;top:1002px;width:37px;height:21px;box-shadow:inset 1px 1px 0 #a39f96,inset -1px -1px 0 #f4f3f0;"></div>
<div class="abs" style="left:1201px;top:1002px;width:58px;height:21px;box-shadow:inset 1px 1px 0 #a39f96,inset -1px -1px 0 #f4f3f0;"></div>
<div class="t" style="left:1203.0px;top:1006.4px;font-size:12.0px;color:#000;transform-origin:0 0;transform:scaleX(1.054);">BRL-CAD</div>

<!-- window border -->
<div class="abs" style="left:1260px;top:0;width:1px;height:1027px;background:#1a1a1a;"></div>
<div class="abs" style="left:0;top:1024px;width:1261px;height:3px;background:#0a0a0a;"></div>
</body>
</html>
